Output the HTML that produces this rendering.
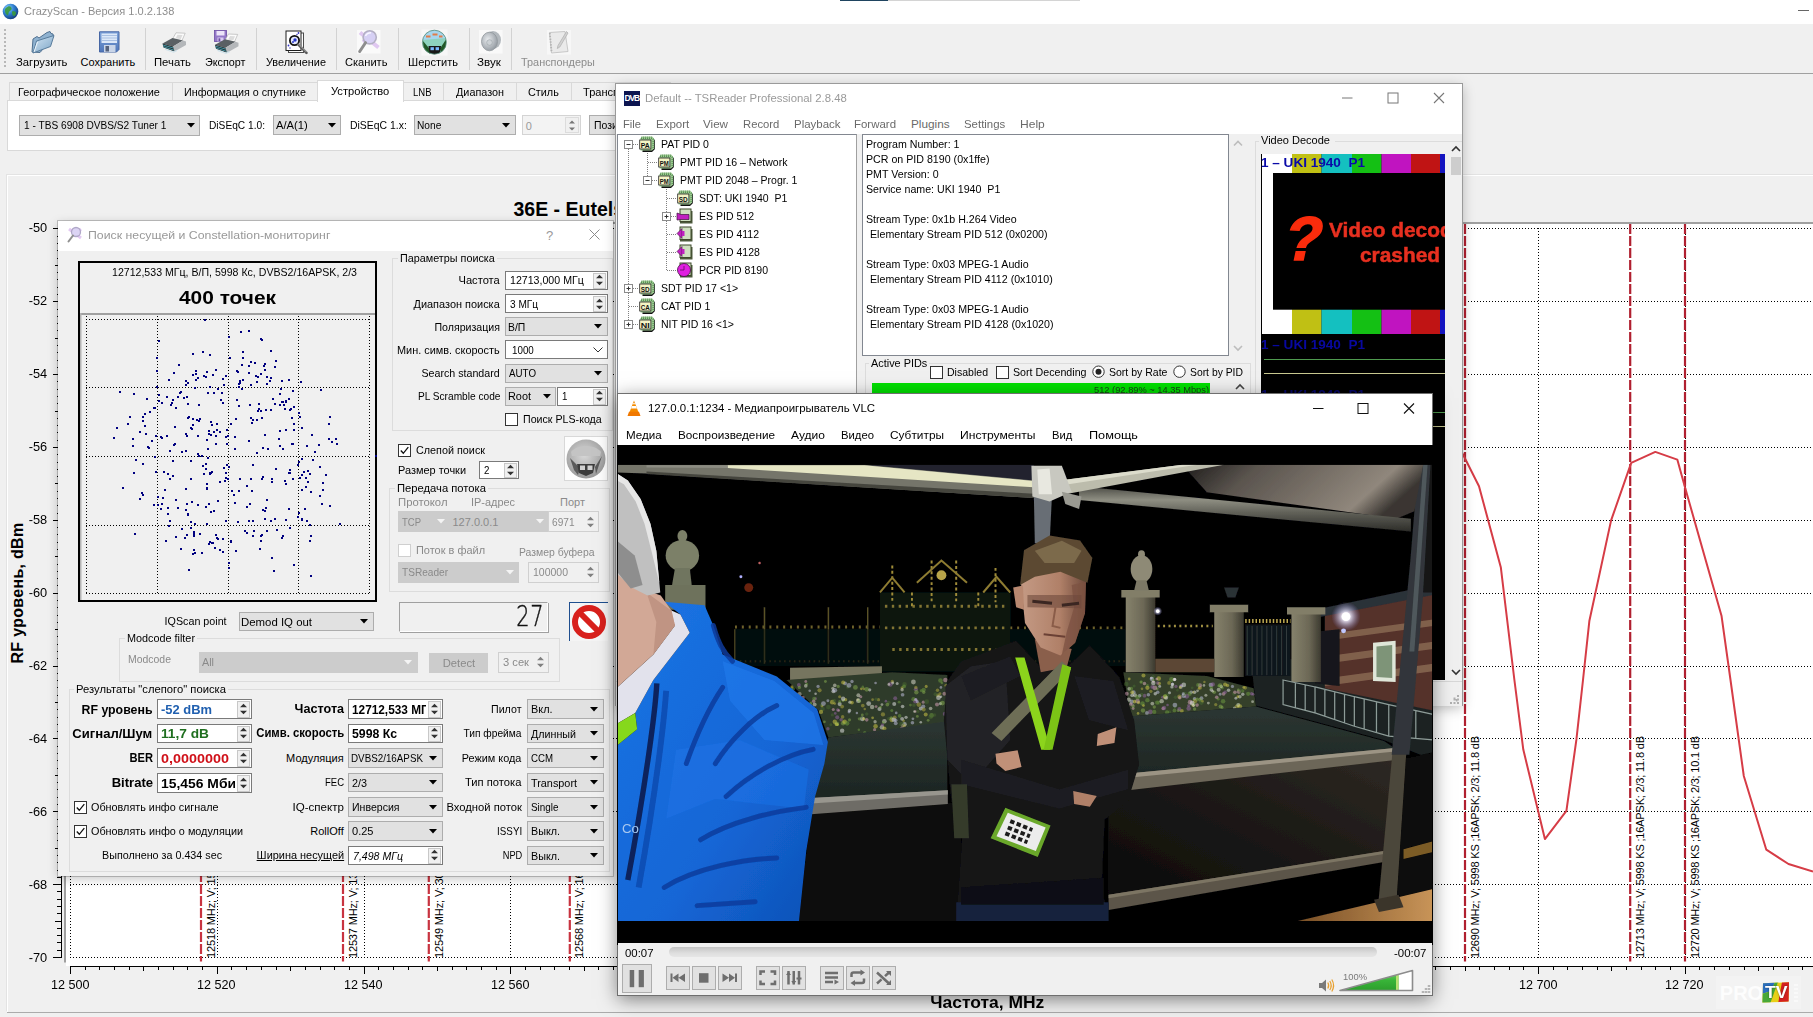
<!DOCTYPE html>
<html lang="ru"><head><meta charset="utf-8"><title>CrazyScan</title><style>
html,body{margin:0;padding:0;}
body{width:1813px;height:1017px;overflow:hidden;background:#f0f0f0;position:relative;font-family:"Liberation Sans",sans-serif;color:#000;}
.t{position:absolute;white-space:pre;font-family:"Liberation Sans",sans-serif;}
svg{overflow:visible;}
svg text{font-family:"Liberation Sans",sans-serif;}
</style></head><body>
<div style="position:absolute;left:0px;top:0px;width:1813px;height:24px;background:#fff;"></div>
<div style="position:absolute;left:840px;top:0px;width:48px;height:1px;background:#1f4460;"></div>
<div style="position:absolute;left:888px;top:0px;width:192px;height:1px;background:#d4d4d4;"></div>
<div style="position:absolute;left:1798px;top:10px;width:11px;height:1px;background:#666;"></div>
<svg style="position:absolute;left:2px;top:3px" width="17" height="17" viewBox="0 0 17 17"><defs><radialGradient id="gl" cx="35%" cy="30%" r="75%"><stop offset="0" stop-color="#8fd0ff"/><stop offset="0.5" stop-color="#2f7fd0"/><stop offset="1" stop-color="#123a7a"/></radialGradient></defs><circle cx="8.5" cy="8.5" r="7.8" fill="url(#gl)"/><path d="M4 5c2-2 4-2 5-1s1 3-1 4-1 3-2 4-3-2-3-4 0-2 1-3zM11 8c2 0 3 1 3 2s-1 3-2 3-2-2-2-3 0-2 1-2z" fill="#3a9a3a" opacity=".9"/></svg>
<div class="t" style="left:24.0px;top:4.0px;font-size:11.8px;line-height:15px;transform:scaleX(0.937);transform-origin:0 50%;color:#8e8e8e;">CrazyScan - Версия 1.0.2.138</div>
<div style="position:absolute;left:0px;top:24px;width:1813px;height:49px;background:#f0f0f0;border-bottom:1px solid #a0a0a0;"></div>
<div style="position:absolute;left:4px;top:29px;width:2px;height:40px;background:repeating-linear-gradient(#b8b8b8 0 2px,#f0f0f0 2px 4px);"></div>
<div style="position:absolute;left:145px;top:28px;width:1px;height:42px;background:#d2d2d2;"></div>
<div style="position:absolute;left:256px;top:28px;width:1px;height:42px;background:#d2d2d2;"></div>
<div style="position:absolute;left:335.5px;top:28px;width:1px;height:42px;background:#d2d2d2;"></div>
<div style="position:absolute;left:397.5px;top:28px;width:1px;height:42px;background:#d2d2d2;"></div>
<div style="position:absolute;left:468.5px;top:28px;width:1px;height:42px;background:#d2d2d2;"></div>
<div style="position:absolute;left:511px;top:28px;width:1px;height:42px;background:#d2d2d2;"></div>
<div class="t" style="left:15.5px;top:54.8px;font-size:11px;line-height:14px;transform:scaleX(1.025);transform-origin:0 50%;">Загрузить</div>
<div class="t" style="left:80.5px;top:54.8px;font-size:11px;line-height:14px;">Сохранить</div>
<div class="t" style="left:153.8px;top:54.8px;font-size:11px;line-height:14px;transform:scaleX(1.027);transform-origin:0 50%;">Печать</div>
<div class="t" style="left:204.5px;top:54.8px;font-size:11px;line-height:14px;transform:scaleX(0.980);transform-origin:0 50%;">Экспорт</div>
<div class="t" style="left:265.5px;top:54.8px;font-size:11px;line-height:14px;transform:scaleX(0.990);transform-origin:0 50%;">Увеличение</div>
<div class="t" style="left:345.0px;top:54.8px;font-size:11px;line-height:14px;transform:scaleX(1.009);transform-origin:0 50%;">Сканить</div>
<div class="t" style="left:407.7px;top:54.8px;font-size:11px;line-height:14px;transform:scaleX(1.005);transform-origin:0 50%;">Шерстить</div>
<div class="t" style="left:477.4px;top:54.8px;font-size:11px;line-height:14px;transform:scaleX(1.055);transform-origin:0 50%;">Звук</div>
<div class="t" style="left:520.6px;top:54.8px;font-size:11px;line-height:14px;transform:scaleX(0.989);transform-origin:0 50%;color:#8c8c8c;">Транспондеры</div>
<svg style="position:absolute;left:30.5px;top:30px" width="24" height="24" viewBox="0 0 24 24"><defs><linearGradient id="fo" x1="0" y1="0" x2="1" y2="1"><stop offset="0" stop-color="#d4e6f4"/><stop offset="1" stop-color="#7ba4c6"/></linearGradient></defs><path d="M1 22L2 9L6 6.5L8 8L16 2.5L19 1.5L20 3.5L22 4L22.5 7L9 22.5Z" fill="#8fb2d0" stroke="#4f7090" stroke-width="1"/><path d="M2 23L5.5 11L23 5.5L19.5 16.5Z" fill="url(#fo)" stroke="#587c9c" stroke-width="1"/><path d="M3 22L6.5 12" stroke="#eef6fc" stroke-width="1"/></svg>
<svg style="position:absolute;left:98px;top:31px" width="22.5" height="22" viewBox="0 0 22.5 22"><defs><linearGradient id="fl" x1="0" y1="0" x2="0" y2="1"><stop offset="0" stop-color="#7ea4dc"/><stop offset="1" stop-color="#4f76b8"/></linearGradient></defs><path d="M1.5 0.8H21V18.5L18.5 21H1.5Z" fill="url(#fl)" stroke="#4666a4" stroke-width="1"/><rect x="3.5" y="2.5" width="15.5" height="9.5" fill="#dce8f8"/><path d="M3.5 4.5H19M3.5 7H19M3.5 9.5H19" stroke="#a9c0e2" stroke-width="1"/><rect x="6" y="14" width="11.5" height="7" fill="#c9d5e8"/><rect x="7.5" y="15" width="3.5" height="5.5" fill="#55627c"/></svg>
<svg style="position:absolute;left:162px;top:32px" width="25" height="21" viewBox="0 0 25 21"><path d="M10.5 7L14 0.8L23.2 1.2L20 8.5Z" fill="#fbfbfb" stroke="#b4b4b4" stroke-width=".7"/><path d="M13.5 6.5L15.5 2.8L20.5 3L18.8 7Z" fill="#dcdcdc"/><path d="M0.5 11.5L10.5 6L21 8.5L11 14.5Z" fill="#5a6064"/><path d="M11 14.5L21 8.5L24 9.5V13L12.5 19.5Z" fill="#b4b7ba"/><path d="M0.5 11.5L11 14.5L12.5 19.5L1.5 15.5Z" fill="#22282b"/><path d="M1 13L11.4 16M1.3 14.6L12 18.2" stroke="#4aa0b0" stroke-width=".9"/><path d="M3 17.2L11.5 20.2L15 18.4" stroke="#cfe2ea" stroke-width="1.2" fill="none"/></svg>
<svg style="position:absolute;left:213.5px;top:29.5px" width="26" height="24" viewBox="0 0 26 24"><rect x="0.5" y="0.5" width="12" height="11" fill="#9478c8" stroke="#6c4ca4" stroke-width=".8"/><rect x="2.5" y="1" width="8" height="4.5" fill="#ece4f8"/><rect x="3.5" y="7.5" width="6" height="4" fill="#d9cdf0"/><rect x="4.5" y="8.3" width="1.8" height="3" fill="#6c4ca4"/><g transform="translate(0.5,3.2)"><path d="M10.5 7L14 0.8L23.2 1.2L20 8.5Z" fill="#fbfbfb" stroke="#b4b4b4" stroke-width=".7"/><path d="M13.5 6.5L15.5 2.8L20.5 3L18.8 7Z" fill="#dcdcdc"/><path d="M0.5 11.5L10.5 6L21 8.5L11 14.5Z" fill="#5a6064"/><path d="M11 14.5L21 8.5L24 9.5V13L12.5 19.5Z" fill="#b4b7ba"/><path d="M0.5 11.5L11 14.5L12.5 19.5L1.5 15.5Z" fill="#22282b"/><path d="M1 13L11.4 16M1.3 14.6L12 18.2" stroke="#4aa0b0" stroke-width=".9"/><path d="M3 17.2L11.5 20.2L15 18.4" stroke="#cfe2ea" stroke-width="1.2" fill="none"/></g></svg>
<svg style="position:absolute;left:285px;top:29.5px" width="24" height="24.5" viewBox="0 0 24 24.5"><rect x="3.5" y="3" width="15" height="19.5" fill="#fdfdfd" stroke="#4a4a4a" stroke-width="1"/><rect x="1" y="1" width="15" height="19.5" fill="#fff" stroke="#1c1c1c" stroke-width="1"/><circle cx="9.5" cy="10.5" r="4.6" fill="#e4e8ff" stroke="#111" stroke-width="1.8"/><circle cx="10" cy="10" r="1.7" fill="#2838c8"/><circle cx="8" cy="12" r="1" fill="#2838c8"/><path d="M13.2 14.4L21.5 22.8" stroke="#5a5a5a" stroke-width="2.6" stroke-linecap="round"/><path d="M13.6 14L21.5 22" stroke="#c8c8c8" stroke-width=".8"/><circle cx="3.5" cy="15.5" r=".9" fill="#3434c4"/><circle cx="13.5" cy="3" r=".9" fill="#3434c4"/><circle cx="5" cy="18" r=".7" fill="#3434c4"/><circle cx="12" cy="4.5" r=".7" fill="#3434c4"/></svg>
<svg style="position:absolute;left:357px;top:30px" width="23.5" height="23.5" viewBox="0 0 23.5 23.5"><rect x="0" y="0" width="23.5" height="23.5" fill="#fafafa"/><path d="M3 2.5L21.5 17.5M6 12L12 7" stroke="#dcc0f0" stroke-width="4" opacity=".85"/><circle cx="12.7" cy="7.3" r="6.6" fill="#d6d0f4" stroke="#b4b0c4" stroke-width="1.6"/><path d="M8.5 6Q10 2.8 14 2.8" stroke="#f8f6ff" stroke-width="1.6" fill="none"/><path d="M8.6 12.6L2.6 21.6" stroke="#8e8e8e" stroke-width="2.8" stroke-linecap="round"/></svg>
<svg style="position:absolute;left:421px;top:28.5px" width="27" height="27" viewBox="0 0 27 27"><rect x="0.5" y="0.5" width="26" height="26" fill="#f7f7f7"/><defs><clipPath id="cc"><circle cx="13.4" cy="13.2" r="12"/></clipPath></defs><g clip-path="url(#cc)"><rect width="27" height="27" fill="#8ed2be"/><path d="M0 0H27V9L0 11Z" fill="#a6d6ee"/><path d="M5 6.5h4.5v2H5zM11.5 4.5h5v2h-5zM18 6.5h3.5v2H18z" fill="#e27c48"/><path d="M2 12L9.5 21L8.5 27H3Z" fill="#215826"/><path d="M25 10.5L19 19.5L20.5 27H25Z" fill="#215826"/><path d="M7.5 17H20L19 23.5L13.5 26L8.5 23.5Z" fill="#181818"/><rect x="9.5" y="18.2" width="3.4" height="3" fill="#7cb8ff"/><rect x="14.6" y="18.2" width="3.4" height="3" fill="#7cb8ff"/></g><circle cx="13.4" cy="13.2" r="12" fill="none" stroke="#5a8a7a" stroke-width=".8"/></svg>
<svg style="position:absolute;left:479px;top:30px" width="23.5" height="23.5" viewBox="0 0 23.5 23.5"><rect x="0" y="0" width="23.5" height="23.5" fill="#f9f9f9"/><defs><radialGradient id="sp" cx="40%" cy="40%" r="65%"><stop offset="0" stop-color="#e8ebee"/><stop offset="1" stop-color="#9299a0"/></radialGradient></defs><ellipse cx="14" cy="10" rx="8" ry="9" fill="#b2b8bd"/><ellipse cx="10.5" cy="11.5" rx="8" ry="9.3" fill="url(#sp)" stroke="#90979c" stroke-width=".8"/><circle cx="10.5" cy="12.5" r="2.8" fill="#ccd1d5" stroke="#9ca3a8" stroke-width=".6"/></svg>
<svg style="position:absolute;left:546.5px;top:30px" width="24" height="24.5" viewBox="0 0 24 24.5"><rect x="0" y="0" width="24" height="24.5" fill="#f7f7f7"/><path d="M2.5 2.5L18 1.5L21 21.5L4.5 23Z" fill="#eaeaea" stroke="#c8c8c8" stroke-width="1"/><path d="M2.8 3L4.6 22.5" stroke="#b4b4b4" stroke-width="1.8" stroke-dasharray="1.4 1.4"/><path d="M19.5 1.5L11 15.5L10.3 18.5L12.8 17L21 3Z" fill="#d2d2d2" stroke="#adadad" stroke-width=".7"/></svg>
<div style="position:absolute;left:8.5px;top:82px;width:162.5px;height:18px;background:#f0f0f0;border:1px solid #d9d9d9;border-bottom:none;"></div>
<div class="t" style="left:18.0px;top:85.0px;font-size:11px;line-height:14px;transform:scaleX(0.995);transform-origin:0 50%;">Географическое положение</div>
<div style="position:absolute;left:172px;top:82px;width:144px;height:18px;background:#f0f0f0;border:1px solid #d9d9d9;border-bottom:none;"></div>
<div class="t" style="left:183.8px;top:85.0px;font-size:11px;line-height:14px;transform:scaleX(0.976);transform-origin:0 50%;">Информация о спутнике</div>
<div style="position:absolute;left:403px;top:82px;width:38.5px;height:18px;background:#f0f0f0;border:1px solid #d9d9d9;border-bottom:none;"></div>
<div class="t" style="left:413.3px;top:85.0px;font-size:11px;line-height:14px;transform:scaleX(0.865);transform-origin:0 50%;">LNB</div>
<div style="position:absolute;left:442.5px;top:82px;width:72.5px;height:18px;background:#f0f0f0;border:1px solid #d9d9d9;border-bottom:none;"></div>
<div class="t" style="left:456.0px;top:85.0px;font-size:11px;line-height:14px;transform:scaleX(0.984);transform-origin:0 50%;">Диапазон</div>
<div style="position:absolute;left:516px;top:82px;width:54px;height:18px;background:#f0f0f0;border:1px solid #d9d9d9;border-bottom:none;"></div>
<div class="t" style="left:528.3px;top:85.0px;font-size:11px;line-height:14px;transform:scaleX(0.985);transform-origin:0 50%;">Стиль</div>
<div style="position:absolute;left:571px;top:82px;width:98px;height:18px;background:#f0f0f0;border:1px solid #d9d9d9;border-bottom:none;"></div>
<div class="t" style="left:583.3px;top:85.0px;font-size:11px;line-height:14px;transform:scaleX(1.005);transform-origin:0 50%;">Транспондеры</div>
<div style="position:absolute;left:7px;top:100px;width:1000px;height:49px;background:#fff;border:1px solid #d9d9d9;"></div>
<div style="position:absolute;left:317px;top:80px;width:85px;height:21px;background:#fff;border:1px solid #d9d9d9;border-bottom:none;"></div>
<div class="t" style="left:330.5px;top:84.0px;font-size:11px;line-height:14px;transform:scaleX(1.013);transform-origin:0 50%;">Устройство</div>
<div style="position:absolute;left:19px;top:114.5px;width:179px;height:19px;background:#e1e1e1;border:1px solid #adadad;"></div><div class="t" style="left:23.8px;top:118.0px;font-size:11px;line-height:14px;transform:scaleX(0.922);transform-origin:0 50%;">1 - TBS 6908 DVBS/S2 Tuner 1</div><svg style="position:absolute;left:187px;top:123.0px" width="8" height="5"><path d="M0 0H8L4 4.5Z" fill="#000"/></svg>
<div class="t" style="left:209.0px;top:118.0px;font-size:11px;line-height:14px;transform:scaleX(0.925);transform-origin:0 50%;">DiSEqC 1.0:</div>
<div style="position:absolute;left:272.5px;top:115px;width:66.5px;height:18px;background:#e1e1e1;border:1px solid #adadad;"></div><div class="t" style="left:276.3px;top:118.0px;font-size:11px;line-height:14px;transform:scaleX(1.020);transform-origin:0 50%;">A/A(1)</div><svg style="position:absolute;left:327.8px;top:123.0px" width="8" height="5"><path d="M0 0H8L4 4.5Z" fill="#000"/></svg>
<div class="t" style="left:349.5px;top:118.0px;font-size:11px;line-height:14px;transform:scaleX(0.948);transform-origin:0 50%;">DiSEqC 1.x:</div>
<div style="position:absolute;left:413.5px;top:115px;width:100px;height:18px;background:#e1e1e1;border:1px solid #adadad;"></div><div class="t" style="left:417.0px;top:118.0px;font-size:11px;line-height:14px;transform:scaleX(0.924);transform-origin:0 50%;">None</div><svg style="position:absolute;left:502px;top:123.0px" width="8" height="5"><path d="M0 0H8L4 4.5Z" fill="#000"/></svg>
<div style="position:absolute;left:522px;top:115px;width:57px;height:18px;background:#f3f3f3;border:1px solid #d4d4d4;"></div>
<div style="position:absolute;left:565px;top:117px;width:12px;height:14px;background:#f0f0f0;border:1px solid #dcdcdc;"></div>
<div class="t" style="left:525.8px;top:118.5px;font-size:11px;line-height:14px;color:#9a9a9a;">0</div>
<svg style="position:absolute;left:567.5px;top:118.5px" width="8" height="13"><path d="M1 4.5L4 1.5L7 4.5M1 8.5L4 11.5L7 8.5" fill="#777" stroke="none"/></svg>
<div style="position:absolute;left:589px;top:115px;width:60px;height:18px;background:#e1e1e1;border:1px solid #adadad;"></div>
<div class="t" style="left:594.0px;top:118.0px;font-size:11px;line-height:14px;transform:scaleX(0.950);transform-origin:0 50%;">Позиционер</div>
<div style="position:absolute;left:7px;top:175px;width:1806px;height:836px;background:#f0f0f0;border:1px solid #fff;border-right:none;border-bottom:none;box-shadow:-1px -1px 0 #e3e3e3;"></div>
<div style="position:absolute;left:7px;top:1011.5px;width:1806px;height:1.6px;background:#ababab;"></div>
<svg style="position:absolute;left:0;top:0" width="1813" height="1017" viewBox="0 0 1813 1017">
<rect x="66" y="224" width="1747" height="742" fill="#fff"/>
<rect x="64" y="222" width="1749" height="2" fill="#a0a0a0"/>
<rect x="64" y="222" width="2" height="740.5" fill="#a0a0a0"/>
<path d="M70.5 228V960M217.5 228V960M364.5 228V960M510.5 228V960M657.5 228V960M804.5 228V960M951.5 228V960M1098.5 228V960M1244.5 228V960M1391.5 228V960M1538.5 228V960M1685.5 228V960M1832.5 228V960M1978.5 228V960M70 228.5H1813M70 301.5H1813M70 374.5H1813M70 447.5H1813M70 520.5H1813M70 593.5H1813M70 666.5H1813M70 738.5H1813M70 811.5H1813M70 884.5H1813M70 957.5H1813" stroke="#000" stroke-width="1" stroke-dasharray="1 2" fill="none" shape-rendering="crispEdges"/>
<path d="M61.5 228V958M53 228.5H62M53 301.5H62M53 374.5H62M53 447.5H62M53 520.5H62M53 593.5H62M53 666.5H62M53 738.5H62M53 811.5H62M53 884.5H62M53 957.5H62M57 236.5H62M57 243.5H62M57 250.5H62M57 258.5H62M55 265.5H62M57 272.5H62M57 279.5H62M57 287.5H62M57 294.5H62M57 309.5H62M57 316.5H62M57 323.5H62M57 330.5H62M55 338.5H62M57 345.5H62M57 352.5H62M57 360.5H62M57 367.5H62M57 381.5H62M57 389.5H62M57 396.5H62M57 403.5H62M55 411.5H62M57 418.5H62M57 425.5H62M57 432.5H62M57 440.5H62M57 454.5H62M57 462.5H62M57 469.5H62M57 476.5H62M55 483.5H62M57 491.5H62M57 498.5H62M57 505.5H62M57 513.5H62M57 527.5H62M57 534.5H62M57 542.5H62M57 549.5H62M55 556.5H62M57 564.5H62M57 571.5H62M57 578.5H62M57 585.5H62M57 600.5H62M57 607.5H62M57 615.5H62M57 622.5H62M55 629.5H62M57 636.5H62M57 644.5H62M57 651.5H62M57 658.5H62M57 673.5H62M57 680.5H62M57 687.5H62M57 695.5H62M55 702.5H62M57 709.5H62M57 717.5H62M57 724.5H62M57 731.5H62M57 746.5H62M57 753.5H62M57 760.5H62M57 768.5H62M55 775.5H62M57 782.5H62M57 789.5H62M57 797.5H62M57 804.5H62M57 819.5H62M57 826.5H62M57 833.5H62M57 840.5H62M55 848.5H62M57 855.5H62M57 862.5H62M57 870.5H62M57 877.5H62M57 891.5H62M57 899.5H62M57 906.5H62M57 913.5H62M55 921.5H62M57 928.5H62M57 935.5H62M57 942.5H62M57 950.5H62M70 966.5H1813M70.5 966V974M85.5 966V970M99.5 966V970M114.5 966V970M129.5 966V970M143.5 966V971M158.5 966V970M173.5 966V970M187.5 966V970M202.5 966V970M217.5 966V974M231.5 966V970M246.5 966V970M261.5 966V970M276.5 966V970M290.5 966V971M305.5 966V970M320.5 966V970M334.5 966V970M349.5 966V970M364.5 966V974M378.5 966V970M393.5 966V970M408.5 966V970M422.5 966V970M437.5 966V971M452.5 966V970M466.5 966V970M481.5 966V970M496.5 966V970M510.5 966V974M525.5 966V970M540.5 966V970M554.5 966V970M569.5 966V970M584.5 966V971M598.5 966V970M613.5 966V970M628.5 966V970M643.5 966V970M657.5 966V974M672.5 966V970M687.5 966V970M701.5 966V970M716.5 966V970M731.5 966V971M745.5 966V970M760.5 966V970M775.5 966V970M789.5 966V970M804.5 966V974M819.5 966V970M833.5 966V970M848.5 966V970M863.5 966V970M877.5 966V971M892.5 966V970M907.5 966V970M921.5 966V970M936.5 966V970M951.5 966V974M965.5 966V970M980.5 966V970M995.5 966V970M1010.5 966V970M1024.5 966V971M1039.5 966V970M1054.5 966V970M1068.5 966V970M1083.5 966V970M1098.5 966V974M1112.5 966V970M1127.5 966V970M1142.5 966V970M1156.5 966V970M1171.5 966V971M1186.5 966V970M1200.5 966V970M1215.5 966V970M1230.5 966V970M1244.5 966V974M1259.5 966V970M1274.5 966V970M1288.5 966V970M1303.5 966V970M1318.5 966V971M1332.5 966V970M1347.5 966V970M1362.5 966V970M1377.5 966V970M1391.5 966V974M1406.5 966V970M1421.5 966V970M1435.5 966V970M1450.5 966V970M1465.5 966V971M1479.5 966V970M1494.5 966V970M1509.5 966V970M1523.5 966V970M1538.5 966V974M1553.5 966V970M1567.5 966V970M1582.5 966V970M1597.5 966V970M1611.5 966V971M1626.5 966V970M1641.5 966V970M1655.5 966V970M1670.5 966V970M1685.5 966V974M1699.5 966V970M1714.5 966V970M1729.5 966V970M1744.5 966V970M1758.5 966V971M1773.5 966V970M1788.5 966V970M1802.5 966V970M1817.5 966V970M1832.5 966V974" stroke="#000" stroke-width="1" fill="none" shape-rendering="crispEdges"/>
<path d="M201 224V961.5" stroke="#c83440" stroke-width="2.2" stroke-dasharray="10 2" fill="none"/>
<path d="M343 224V961.5" stroke="#c83440" stroke-width="2.2" stroke-dasharray="10 2" fill="none"/>
<path d="M428.8 224V961.5" stroke="#c83440" stroke-width="2.2" stroke-dasharray="10 2" fill="none"/>
<path d="M569.8 224V961.5" stroke="#c83440" stroke-width="2.2" stroke-dasharray="10 2" fill="none"/>
<path d="M1465 224V961.5" stroke="#b02030" stroke-width="2.2" stroke-dasharray="10 2" fill="none"/>
<path d="M1630.2 224V961.5" stroke="#b02030" stroke-width="2.2" stroke-dasharray="10 2" fill="none"/>
<path d="M1685 224V961.5" stroke="#b02030" stroke-width="2.2" stroke-dasharray="10 2" fill="none"/>
<polyline points="1455,440 1463.4,455.2 1479,486.3 1500.8,567.2 1514.4,680 1523.3,749.6 1544.9,839.1 1566.4,810.9 1576.4,739.7 1583,680 1589.4,620.7 1611.1,520.4 1631.2,462.9 1655.3,451.9 1677.3,459.6 1684.7,486.3 1721.5,615.7 1730.5,680 1743.8,776 1766.3,849.7 1788.5,864 1813,871.6" stroke="#d63c46" stroke-width="2" fill="none" stroke-linejoin="round"/>
<text transform="translate(214.5,958) rotate(-90)" font-size="11" fill="#000" textLength="217" lengthAdjust="spacing">12518 MHz; V; 15000 KS ;8PSK; 3/4; 11.2 dB</text>
<text transform="translate(356.5,958) rotate(-90)" font-size="11" fill="#000" textLength="217" lengthAdjust="spacing">12537 MHz; V; 13333 KS ;8PSK; 3/4; 10.9 dB</text>
<text transform="translate(442.5,958) rotate(-90)" font-size="11" fill="#000" textLength="212" lengthAdjust="spacing">12549 MHz; V; 3000 KS ;8PSK; 3/4; 10.5 dB</text>
<text transform="translate(582.5,958) rotate(-90)" font-size="11" fill="#000" textLength="217" lengthAdjust="spacing">12568 MHz; V; 16000 KS ;8PSK; 3/4; 11.0 dB</text>
<text transform="translate(1478.5,958) rotate(-90)" font-size="11" fill="#000" textLength="222" lengthAdjust="spacing">12690 MHz; V; 5998 KS ;16APSK; 2/3; 11.8 dB</text>
<text transform="translate(1643.5,958) rotate(-90)" font-size="11" fill="#000" textLength="222" lengthAdjust="spacing">12713 MHz; V; 5998 KS ;16APSK; 2/3; 11.8 dB</text>
<text transform="translate(1699,958) rotate(-90)" font-size="11" fill="#000" textLength="222" lengthAdjust="spacing">12720 MHz; V; 5998 KS ;16APSK; 2/3; 10.1 dB</text>
</svg>
<div class="t" style="left:513.5px;top:197.0px;font-size:19.5px;line-height:25px;font-weight:bold;">36E - Eutelsat 36B</div>
<div class="t" style="left:28.3px;top:219.4px;font-size:13.3px;line-height:17px;transform:scaleX(0.963);transform-origin:100% 50%;">-50</div>
<div class="t" style="left:28.3px;top:292.4px;font-size:13.3px;line-height:17px;transform:scaleX(0.963);transform-origin:100% 50%;">-52</div>
<div class="t" style="left:28.3px;top:365.4px;font-size:13.3px;line-height:17px;transform:scaleX(0.963);transform-origin:100% 50%;">-54</div>
<div class="t" style="left:28.3px;top:438.4px;font-size:13.3px;line-height:17px;transform:scaleX(0.963);transform-origin:100% 50%;">-56</div>
<div class="t" style="left:28.3px;top:511.4px;font-size:13.3px;line-height:17px;transform:scaleX(0.963);transform-origin:100% 50%;">-58</div>
<div class="t" style="left:28.3px;top:584.4px;font-size:13.3px;line-height:17px;transform:scaleX(0.963);transform-origin:100% 50%;">-60</div>
<div class="t" style="left:28.3px;top:657.4px;font-size:13.3px;line-height:17px;transform:scaleX(0.963);transform-origin:100% 50%;">-62</div>
<div class="t" style="left:28.3px;top:730.4px;font-size:13.3px;line-height:17px;transform:scaleX(0.963);transform-origin:100% 50%;">-64</div>
<div class="t" style="left:28.3px;top:803.4px;font-size:13.3px;line-height:17px;transform:scaleX(0.963);transform-origin:100% 50%;">-66</div>
<div class="t" style="left:28.3px;top:876.4px;font-size:13.3px;line-height:17px;transform:scaleX(0.963);transform-origin:100% 50%;">-68</div>
<div class="t" style="left:28.3px;top:949.4px;font-size:13.3px;line-height:17px;transform:scaleX(0.963);transform-origin:100% 50%;">-70</div>
<div class="t" style="left:49.6px;top:975.5px;font-size:13.3px;line-height:17px;transform:scaleX(0.947);transform-origin:50% 50%;">12 500</div>
<div class="t" style="left:196.4px;top:975.5px;font-size:13.3px;line-height:17px;transform:scaleX(0.947);transform-origin:50% 50%;">12 520</div>
<div class="t" style="left:343.2px;top:975.5px;font-size:13.3px;line-height:17px;transform:scaleX(0.947);transform-origin:50% 50%;">12 540</div>
<div class="t" style="left:490.0px;top:975.5px;font-size:13.3px;line-height:17px;transform:scaleX(0.947);transform-origin:50% 50%;">12 560</div>
<div class="t" style="left:636.8px;top:975.5px;font-size:13.3px;line-height:17px;transform:scaleX(0.947);transform-origin:50% 50%;">12 580</div>
<div class="t" style="left:783.6px;top:975.5px;font-size:13.3px;line-height:17px;transform:scaleX(0.947);transform-origin:50% 50%;">12 600</div>
<div class="t" style="left:930.4px;top:975.5px;font-size:13.3px;line-height:17px;transform:scaleX(0.947);transform-origin:50% 50%;">12 620</div>
<div class="t" style="left:1077.2px;top:975.5px;font-size:13.3px;line-height:17px;transform:scaleX(0.947);transform-origin:50% 50%;">12 640</div>
<div class="t" style="left:1224.0px;top:975.5px;font-size:13.3px;line-height:17px;transform:scaleX(0.947);transform-origin:50% 50%;">12 660</div>
<div class="t" style="left:1370.8px;top:975.5px;font-size:13.3px;line-height:17px;transform:scaleX(0.947);transform-origin:50% 50%;">12 680</div>
<div class="t" style="left:1517.6px;top:975.5px;font-size:13.3px;line-height:17px;transform:scaleX(0.947);transform-origin:50% 50%;">12 700</div>
<div class="t" style="left:1664.4px;top:975.5px;font-size:13.3px;line-height:17px;transform:scaleX(0.947);transform-origin:50% 50%;">12 720</div>
<div class="t" style="left:934.7px;top:992.0px;font-size:16px;line-height:21px;transform:scaleX(1.090);transform-origin:50% 50%;font-weight:bold;">Частота, MHz</div>
<div class="t" style="left:-62px;top:583px;width:160px;text-align:center;font-size:16px;font-weight:bold;line-height:20px;transform:rotate(-90deg);letter-spacing:0.3px;">RF уровень, dBm</div>
<div style="position:absolute;left:58px;top:220.5px;width:555px;height:655.5px;background:#f0f0f0;box-shadow:0 0 0 1px rgba(0,0,0,.2), 0 3px 10px rgba(0,0,0,.22);"></div>
<div style="position:absolute;left:58px;top:220.5px;width:555px;height:30.5px;background:#fff;"></div>
<svg style="position:absolute;left:67px;top:226px" width="16" height="17" viewBox="0 0 16 17"><path d="M2 3L14 12M14 3L8 8" stroke="#dcbcf0" stroke-width="3" opacity=".8"/><circle cx="9" cy="6" r="4.5" fill="#dcd4f4" stroke="#b0a8c8" stroke-width="1.3"/><path d="M6 9.5L1.5 15.5" stroke="#909090" stroke-width="2" stroke-linecap="round"/></svg>
<div class="t" style="left:87.5px;top:227.7px;font-size:11.8px;line-height:15px;transform:scaleX(1.043);transform-origin:0 50%;color:#999;">Поиск несущей и Constellation-мониторинг</div>
<div class="t" style="left:545.9px;top:226.5px;font-size:13px;line-height:17px;color:#999;">?</div>
<svg style="position:absolute;left:589px;top:229px" width="11" height="11"><path d="M0.5 0.5L10.5 10.5M10.5 0.5L0.5 10.5" stroke="#8a8a8a" stroke-width="1"/></svg>
<div style="position:absolute;left:78px;top:261px;width:295px;height:337px;border:2px solid #000;background:#f0f0f0;"></div>
<div class="t" style="left:111.8px;top:265.0px;font-size:11px;line-height:14px;transform:scaleX(0.962);transform-origin:0 50%;">12712,533 МГц, В/П, 5998 Кс, DVBS2/16APSK, 2/3</div>
<div class="t" style="left:179.3px;top:285.5px;font-size:18.5px;line-height:24px;transform:scaleX(1.129);transform-origin:0 50%;font-weight:bold;">400 точек</div>
<svg style="position:absolute;left:0;top:0" width="1813" height="1017" viewBox="0 0 1813 1017"><rect x="80" y="313" width="295" height="2" fill="#a0a0a0"/><rect x="80" y="313" width="1.5" height="287" fill="#b4b4b4"/><path d="M86.5 316V595M157.5 316V595M228.5 316V595M298.5 316V595M369.5 316V595M86 319.5H370M86 387.5H370M86 456.5H370M86 525.5H370M86 593.5H370" stroke="#000" stroke-width="1" stroke-dasharray="1 2" fill="none" shape-rendering="crispEdges"/><path d="M167 473h2v2h-2zM226 443h2v2h-2zM139 498h2v2h-2zM266 376h2v2h-2zM208 503h2v2h-2zM211 424h2v2h-2zM192 353h2v2h-2zM192 424h2v2h-2zM239 382h2v2h-2zM132 445h2v2h-2zM127 423h2v2h-2zM228 466h2v2h-2zM193 535h2v2h-2zM192 418h2v2h-2zM252 520h2v2h-2zM276 529h2v2h-2zM281 380h2v2h-2zM116 427h2v2h-2zM273 570h2v2h-2zM239 478h2v2h-2zM162 497h2v2h-2zM213 431h2v2h-2zM142 494h2v2h-2zM289 469h2v2h-2zM225 472h2v2h-2zM231 490h2v2h-2zM281 537h2v2h-2zM190 521h2v2h-2zM269 380h2v2h-2zM250 361h2v2h-2zM177 396h2v2h-2zM322 489h2v2h-2zM195 370h2v2h-2zM158 340h2v2h-2zM217 538h2v2h-2zM299 416h2v2h-2zM227 435h2v2h-2zM170 404h2v2h-2zM160 508h2v2h-2zM298 412h2v2h-2zM174 443h2v2h-2zM194 552h2v2h-2zM301 474h2v2h-2zM225 477h2v2h-2zM246 485h2v2h-2zM230 423h2v2h-2zM167 513h2v2h-2zM241 364h2v2h-2zM194 387h2v2h-2zM329 505h2v2h-2zM270 520h2v2h-2zM318 444h2v2h-2zM146 398h2v2h-2zM261 478h2v2h-2zM184 537h2v2h-2zM250 417h2v2h-2zM202 465h2v2h-2zM185 509h2v2h-2zM178 364h2v2h-2zM135 459h2v2h-2zM260 338h2v2h-2zM213 392h2v2h-2zM279 430h2v2h-2zM304 508h2v2h-2zM134 533h2v2h-2zM187 513h2v2h-2zM223 384h2v2h-2zM157 504h2v2h-2zM225 436h2v2h-2zM211 471h2v2h-2zM213 510h2v2h-2zM319 466h2v2h-2zM186 503h2v2h-2zM180 548h2v2h-2zM205 468h2v2h-2zM328 438h2v2h-2zM288 508h2v2h-2zM297 464h2v2h-2zM335 438h2v2h-2zM210 472h2v2h-2zM260 540h2v2h-2zM260 373h2v2h-2zM209 354h2v2h-2zM252 535h2v2h-2zM191 501h2v2h-2zM265 507h2v2h-2zM285 429h2v2h-2zM270 409h2v2h-2zM251 422h2v2h-2zM278 438h2v2h-2zM197 453h2v2h-2zM307 470h2v2h-2zM207 448h2v2h-2zM227 478h2v2h-2zM185 488h2v2h-2zM242 351h2v2h-2zM292 478h2v2h-2zM203 375h2v2h-2zM254 362h2v2h-2zM238 490h2v2h-2zM197 377h2v2h-2zM158 394h2v2h-2zM328 423h2v2h-2zM193 549h2v2h-2zM293 564h2v2h-2zM215 534h2v2h-2zM217 388h2v2h-2zM201 552h2v2h-2zM164 489h2v2h-2zM133 472h2v2h-2zM234 448h2v2h-2zM145 433h2v2h-2zM215 369h2v2h-2zM166 435h2v2h-2zM283 404h2v2h-2zM264 518h2v2h-2zM154 407h2v2h-2zM303 471h2v2h-2zM210 421h2v2h-2zM206 483h2v2h-2zM209 472h2v2h-2zM238 386h2v2h-2zM339 523h2v2h-2zM261 534h2v2h-2zM331 441h2v2h-2zM262 476h2v2h-2zM289 409h2v2h-2zM139 431h2v2h-2zM274 518h2v2h-2zM190 460h2v2h-2zM234 436h2v2h-2zM236 370h2v2h-2zM309 540h2v2h-2zM237 521h2v2h-2zM222 538h2v2h-2zM264 369h2v2h-2zM292 443h2v2h-2zM208 430h2v2h-2zM166 396h2v2h-2zM225 520h2v2h-2zM129 416h2v2h-2zM197 435h2v2h-2zM301 519h2v2h-2zM172 475h2v2h-2zM242 379h2v2h-2zM248 372h2v2h-2zM219 549h2v2h-2zM249 404h2v2h-2zM206 488h2v2h-2zM193 531h2v2h-2zM147 446h2v2h-2zM290 408h2v2h-2zM210 511h2v2h-2zM321 503h2v2h-2zM336 443h2v2h-2zM246 506h2v2h-2zM329 416h2v2h-2zM260 410h2v2h-2zM212 374h2v2h-2zM187 514h2v2h-2zM262 509h2v2h-2zM206 371h2v2h-2zM207 457h2v2h-2zM203 473h2v2h-2zM305 486h2v2h-2zM174 426h2v2h-2zM204 319h2v2h-2zM309 473h2v2h-2zM153 407h2v2h-2zM257 376h2v2h-2zM156 370h2v2h-2zM311 434h2v2h-2zM179 392h2v2h-2zM242 357h2v2h-2zM132 438h2v2h-2zM271 478h2v2h-2zM190 427h2v2h-2zM248 440h2v2h-2zM301 518h2v2h-2zM255 375h2v2h-2zM180 391h2v2h-2zM192 374h2v2h-2zM173 372h2v2h-2zM209 541h2v2h-2zM298 461h2v2h-2zM291 443h2v2h-2zM250 478h2v2h-2zM155 471h2v2h-2zM240 331h2v2h-2zM151 440h2v2h-2zM230 541h2v2h-2zM197 504h2v2h-2zM206 439h2v2h-2zM144 425h2v2h-2zM158 400h2v2h-2zM175 499h2v2h-2zM258 408h2v2h-2zM248 365h2v2h-2zM222 551h2v2h-2zM113 437h2v2h-2zM314 451h2v2h-2zM142 463h2v2h-2zM161 402h2v2h-2zM289 472h2v2h-2zM280 388h2v2h-2zM288 472h2v2h-2zM169 478h2v2h-2zM293 429h2v2h-2zM281 401h2v2h-2zM186 396h2v2h-2zM270 350h2v2h-2zM228 562h2v2h-2zM238 383h2v2h-2zM185 433h2v2h-2zM186 534h2v2h-2zM279 393h2v2h-2zM192 553h2v2h-2zM171 402h2v2h-2zM262 447h2v2h-2zM325 474h2v2h-2zM177 507h2v2h-2zM297 516h2v2h-2zM251 490h2v2h-2zM275 468h2v2h-2zM310 535h2v2h-2zM252 419h2v2h-2zM198 420h2v2h-2zM291 417h2v2h-2zM246 532h2v2h-2zM194 523h2v2h-2zM239 380h2v2h-2zM264 434h2v2h-2zM282 535h2v2h-2zM195 373h2v2h-2zM225 375h2v2h-2zM161 437h2v2h-2zM259 548h2v2h-2zM260 535h2v2h-2zM198 404h2v2h-2zM167 507h2v2h-2zM149 411h2v2h-2zM237 371h2v2h-2zM250 384h2v2h-2zM169 450h2v2h-2zM300 381h2v2h-2zM216 429h2v2h-2zM211 542h2v2h-2zM282 448h2v2h-2zM256 419h2v2h-2zM144 413h2v2h-2zM279 404h2v2h-2zM309 524h2v2h-2zM233 494h2v2h-2zM285 519h2v2h-2zM187 403h2v2h-2zM223 467h2v2h-2zM188 569h2v2h-2zM271 557h2v2h-2zM222 402h2v2h-2zM236 399h2v2h-2zM322 482h2v2h-2zM212 542h2v2h-2zM209 473h2v2h-2zM248 330h2v2h-2zM141 492h2v2h-2zM205 463h2v2h-2zM163 471h2v2h-2zM219 481h2v2h-2zM301 458h2v2h-2zM217 500h2v2h-2zM319 495h2v2h-2zM258 403h2v2h-2zM293 423h2v2h-2zM122 487h2v2h-2zM190 478h2v2h-2zM285 401h2v2h-2zM186 435h2v2h-2zM320 389h2v2h-2zM206 487h2v2h-2zM205 506h2v2h-2zM289 527h2v2h-2zM266 499h2v2h-2zM252 464h2v2h-2zM156 386h2v2h-2zM175 407h2v2h-2zM209 386h2v2h-2zM241 388h2v2h-2zM195 370h2v2h-2zM219 431h2v2h-2zM284 480h2v2h-2zM228 336h2v2h-2zM216 423h2v2h-2zM224 480h2v2h-2zM264 363h2v2h-2zM272 398h2v2h-2zM267 448h2v2h-2zM175 536h2v2h-2zM375 455h2v2h-2zM187 417h2v2h-2zM261 339h2v2h-2zM244 530h2v2h-2zM155 435h2v2h-2zM299 477h2v2h-2zM256 452h2v2h-2zM301 427h2v2h-2zM274 403h2v2h-2zM142 416h2v2h-2zM198 455h2v2h-2zM169 520h2v2h-2zM161 503h2v2h-2zM208 543h2v2h-2zM257 410h2v2h-2zM193 533h2v2h-2zM288 398h2v2h-2zM282 401h2v2h-2zM172 460h2v2h-2zM293 406h2v2h-2zM292 390h2v2h-2zM306 445h2v2h-2zM238 405h2v2h-2zM226 429h2v2h-2zM188 416h2v2h-2zM226 464h2v2h-2zM263 365h2v2h-2zM199 533h2v2h-2zM310 491h2v2h-2zM216 537h2v2h-2zM181 528h2v2h-2zM270 377h2v2h-2zM199 418h2v2h-2zM190 527h2v2h-2zM142 420h2v2h-2zM185 384h2v2h-2zM274 518h2v2h-2zM235 418h2v2h-2zM185 380h2v2h-2zM301 489h2v2h-2zM214 547h2v2h-2zM228 567h2v2h-2zM215 435h2v2h-2zM154 456h2v2h-2zM207 392h2v2h-2zM311 434h2v2h-2zM266 530h2v2h-2zM298 512h2v2h-2zM274 366h2v2h-2zM222 378h2v2h-2zM191 428h2v2h-2zM187 382h2v2h-2zM133 393h2v2h-2zM229 357h2v2h-2zM205 376h2v2h-2zM265 409h2v2h-2zM156 357h2v2h-2zM288 379h2v2h-2zM196 419h2v2h-2zM264 510h2v2h-2zM249 503h2v2h-2zM206 523h2v2h-2zM230 540h2v2h-2zM168 525h2v2h-2zM220 399h2v2h-2zM201 455h2v2h-2zM119 391h2v2h-2zM148 447h2v2h-2zM221 392h2v2h-2zM235 550h2v2h-2zM215 443h2v2h-2zM208 433h2v2h-2zM165 540h2v2h-2zM195 379h2v2h-2zM312 459h2v2h-2zM307 481h2v2h-2zM202 351h2v2h-2zM185 450h2v2h-2zM161 402h2v2h-2zM279 445h2v2h-2zM153 504h2v2h-2zM306 520h2v2h-2zM210 434h2v2h-2zM285 400h2v2h-2zM271 481h2v2h-2zM256 381h2v2h-2zM253 530h2v2h-2zM173 444h2v2h-2zM305 477h2v2h-2zM248 520h2v2h-2zM310 575h2v2h-2zM172 399h2v2h-2zM181 451h2v2h-2zM168 379h2v2h-2zM234 502h2v2h-2zM160 436h2v2h-2zM266 383h2v2h-2zM284 408h2v2h-2zM275 360h2v2h-2zM157 496h2v2h-2zM183 397h2v2h-2zM285 483h2v2h-2zM261 417h2v2h-2z" fill="#000080" shape-rendering="crispEdges"/></svg>
<div style="position:absolute;left:392px;top:258px;width:219px;height:171px;border:1px solid #dcdcdc;"></div><div style="position:absolute;left:398.3px;top:251px;width:98.8px;height:14px;background:#f0f0f0;"></div><div class="t" style="left:400.3px;top:251.0px;font-size:11px;line-height:14px;transform:scaleX(0.982);transform-origin:0 50%;">Параметры поиска</div>
<div class="t" style="left:459.2px;top:273.0px;font-size:11px;line-height:14px;transform:scaleX(1.013);transform-origin:100% 50%;">Частота</div>
<div class="t" style="left:413.3px;top:296.5px;font-size:11px;line-height:14px;transform:scaleX(0.994);transform-origin:100% 50%;">Диапазон поиска</div>
<div class="t" style="left:432.0px;top:319.5px;font-size:11px;line-height:14px;transform:scaleX(0.964);transform-origin:100% 50%;">Поляризация</div>
<div class="t" style="left:396.3px;top:342.5px;font-size:11px;line-height:14px;transform:scaleX(0.990);transform-origin:100% 50%;">Мин. симв. скорость</div>
<div class="t" style="left:419.3px;top:365.7px;font-size:11px;line-height:14px;transform:scaleX(0.970);transform-origin:100% 50%;">Search standard</div>
<div class="t" style="left:410.5px;top:389.2px;font-size:11px;line-height:14px;transform:scaleX(0.923);transform-origin:100% 50%;">PL Scramble code</div>
<div style="position:absolute;left:505px;top:270.5px;width:101px;height:17px;background:#fff;border:1px solid #7a7a7a;"></div><div style="position:absolute;left:505px;top:270.5px;width:87px;height:19px;overflow:hidden;"><div class="t" style="left:4.8px;top:2.8px;font-size:11px;line-height:14px;transform:scaleX(0.965);transform-origin:0 50%;">12713,000 МГц</div></div><div style="position:absolute;left:593px;top:272.5px;width:11px;height:14px;background:#f0f0f0;border:1px solid #c8c8c8;"></div><svg style="position:absolute;left:596px;top:274.0px" width="7" height="12"><path d="M0 4.2L3.5 0.7L7 4.2ZM0 7.8L3.5 11.3L7 7.8Z" fill="#333"/></svg>
<div style="position:absolute;left:505px;top:294px;width:101px;height:17px;background:#fff;border:1px solid #7a7a7a;"></div><div style="position:absolute;left:505px;top:294px;width:87px;height:19px;overflow:hidden;"><div class="t" style="left:4.5px;top:2.8px;font-size:11px;line-height:14px;transform:scaleX(0.915);transform-origin:0 50%;">3 МГц</div></div><div style="position:absolute;left:593px;top:296px;width:11px;height:14px;background:#f0f0f0;border:1px solid #c8c8c8;"></div><svg style="position:absolute;left:596px;top:297.5px" width="7" height="12"><path d="M0 4.2L3.5 0.7L7 4.2ZM0 7.8L3.5 11.3L7 7.8Z" fill="#333"/></svg>
<div style="position:absolute;left:505px;top:317px;width:101px;height:17px;background:#e1e1e1;border:1px solid #adadad;"></div><div class="t" style="left:508.3px;top:319.8px;font-size:11px;line-height:14px;transform:scaleX(0.945);transform-origin:0 50%;">В/П</div><svg style="position:absolute;left:594.4px;top:324.2px" width="8" height="4.5"><path d="M0 0H8L4.0 4.5Z" fill="#000"/></svg>
<div style="position:absolute;left:505px;top:340px;width:101px;height:17px;background:#fff;border:1px solid #7a7a7a;"></div>
<div class="t" style="left:512.2px;top:342.8px;font-size:11px;line-height:14px;transform:scaleX(0.891);transform-origin:0 50%;">1000</div>
<svg style="position:absolute;left:593px;top:347px" width="10" height="6"><path d="M0.5 0.5L5 5L9.5 0.5" stroke="#333" stroke-width="1" fill="none"/></svg>
<div style="position:absolute;left:505px;top:363.5px;width:101px;height:17px;background:#e1e1e1;border:1px solid #adadad;"></div><div class="t" style="left:508.9px;top:366.3px;font-size:11px;line-height:14px;transform:scaleX(0.889);transform-origin:0 50%;">AUTO</div><svg style="position:absolute;left:594.4px;top:370.8px" width="8" height="4.5"><path d="M0 0H8L4.0 4.5Z" fill="#000"/></svg>
<div style="position:absolute;left:505px;top:386.5px;width:49px;height:17px;background:#e1e1e1;border:1px solid #adadad;"></div><div class="t" style="left:508.3px;top:389.3px;font-size:11px;line-height:14px;transform:scaleX(0.990);transform-origin:0 50%;">Root</div><svg style="position:absolute;left:543.2px;top:393.8px" width="8" height="4.5"><path d="M0 0H8L4.0 4.5Z" fill="#000"/></svg>
<div style="position:absolute;left:557px;top:386.5px;width:49px;height:17px;background:#fff;border:1px solid #7a7a7a;"></div><div style="position:absolute;left:557px;top:386.5px;width:35px;height:19px;overflow:hidden;"><div class="t" style="left:5.0px;top:2.8px;font-size:11px;line-height:14px;transform:scaleX(0.885);transform-origin:0 50%;">1</div></div><div style="position:absolute;left:593px;top:388.5px;width:11px;height:14px;background:#f0f0f0;border:1px solid #c8c8c8;"></div><svg style="position:absolute;left:596px;top:390.0px" width="7" height="12"><path d="M0 4.2L3.5 0.7L7 4.2ZM0 7.8L3.5 11.3L7 7.8Z" fill="#333"/></svg>
<div style="position:absolute;left:505px;top:412.5px;width:11px;height:11px;background:#fff;border:1px solid #333;"></div>
<div class="t" style="left:522.6px;top:412.0px;font-size:11px;line-height:14px;transform:scaleX(0.968);transform-origin:0 50%;">Поиск PLS-кода</div>
<div style="position:absolute;left:398px;top:444px;width:11px;height:11px;background:#fff;border:1px solid #333;"></div><svg style="position:absolute;left:398px;top:444px" width="13" height="13"><path d="M2.8 6.5L5.3 9.3L10.3 3.2" stroke="#111" stroke-width="1.3" fill="none"/></svg>
<div class="t" style="left:415.8px;top:443.0px;font-size:11px;line-height:14px;transform:scaleX(0.982);transform-origin:0 50%;">Слепой поиск</div>
<div class="t" style="left:398.0px;top:463.3px;font-size:11px;line-height:14px;transform:scaleX(0.995);transform-origin:0 50%;">Размер точки</div>
<div style="position:absolute;left:478.5px;top:461px;width:38.5px;height:16px;background:#fff;border:1px solid #7a7a7a;"></div><div style="position:absolute;left:478.5px;top:461px;width:24.5px;height:18px;overflow:hidden;"><div class="t" style="left:5.5px;top:2.3px;font-size:11px;line-height:14px;transform:scaleX(0.885);transform-origin:0 50%;">2</div></div><div style="position:absolute;left:504.0px;top:463px;width:11px;height:13px;background:#f0f0f0;border:1px solid #c8c8c8;"></div><svg style="position:absolute;left:507.0px;top:464.0px" width="7" height="12"><path d="M0 4.2L3.5 0.7L7 4.2ZM0 7.8L3.5 11.3L7 7.8Z" fill="#333"/></svg>
<div style="position:absolute;left:563.5px;top:436px;width:42.5px;height:43px;background:#fdfdfd;border:1px solid #d8d8d8;"></div>
<svg style="position:absolute;left:565px;top:438px" width="42" height="42" viewBox="0 0 42 42"><defs><radialGradient id="cb" cx="45%" cy="40%" r="60%"><stop offset="0" stop-color="#d8d8d8"/><stop offset="1" stop-color="#9a9a9a"/></radialGradient></defs><circle cx="21" cy="21" r="19.5" fill="url(#cb)"/><path d="M6 14C12 6 30 6 36 14L35 18L7 18Z" fill="#c4c4c4"/><path d="M5 20L15 30L13 37L9 32Z" fill="#5a5a5a"/><path d="M37 18L30 29L31 36Z" fill="#5a5a5a"/><path d="M12 26H30L28 35L21 38L14 35Z" fill="#3c3c3c"/><rect x="15" y="27.5" width="5" height="4.5" fill="#d0d0d0"/><rect x="22.5" y="27.5" width="5" height="4.5" fill="#d0d0d0"/></svg>
<div style="position:absolute;left:388.5px;top:487.5px;width:219px;height:102px;border:1px solid #dcdcdc;"></div><div style="position:absolute;left:394.5px;top:480.5px;width:93px;height:14px;background:#f0f0f0;"></div><div class="t" style="left:396.5px;top:480.5px;font-size:11px;line-height:14px;transform:scaleX(1.020);transform-origin:0 50%;">Передача потока</div>
<div class="t" style="left:398.4px;top:495.0px;font-size:11px;line-height:14px;transform:scaleX(1.028);transform-origin:0 50%;color:#8a8a8a;">Протокол</div>
<div class="t" style="left:470.7px;top:495.0px;font-size:11px;line-height:14px;transform:scaleX(0.993);transform-origin:0 50%;color:#8a8a8a;">IP-адрес</div>
<div class="t" style="left:560.0px;top:495.0px;font-size:11px;line-height:14px;color:#8a8a8a;">Порт</div>
<div style="position:absolute;left:398px;top:511px;width:50px;height:21px;background:#cccccc;"></div><div class="t" style="left:402.0px;top:514.8px;font-size:11px;line-height:14px;transform:scaleX(0.864);transform-origin:0 50%;color:#8a8a8a;">TCP</div><svg style="position:absolute;left:436.5px;top:519.2px" width="8" height="4.5"><path d="M0 0H8L4.0 4.5Z" fill="#f4f4f4"/></svg>
<div style="position:absolute;left:447.5px;top:511px;width:1px;height:21px;background:#d8d8d8;"></div>
<div style="position:absolute;left:448px;top:511px;width:100px;height:21px;background:#cccccc;"></div><div class="t" style="left:452.5px;top:514.8px;font-size:11px;line-height:14px;color:#8a8a8a;">127.0.0.1</div><svg style="position:absolute;left:536.0px;top:519.2px" width="8" height="4.5"><path d="M0 0H8L4.0 4.5Z" fill="#f4f4f4"/></svg>
<div style="position:absolute;left:548px;top:511px;width:49px;height:19px;background:#f0f0f0;border:1px solid #d0d0d0;"></div><div style="position:absolute;left:548px;top:511px;width:35px;height:21px;overflow:hidden;"><div class="t" style="left:4.0px;top:3.8px;font-size:11px;line-height:14px;transform:scaleX(0.920);transform-origin:0 50%;color:#8a8a8a;">6971</div></div><svg style="position:absolute;left:587px;top:515.5px" width="7" height="12"><path d="M0 4.2L3.5 0.7L7 4.2ZM0 7.8L3.5 11.3L7 7.8Z" fill="#808080"/></svg>
<div style="position:absolute;left:398px;top:543.5px;width:11px;height:11px;background:#fff;border:1px solid #cfcfcf;"></div>
<div class="t" style="left:415.5px;top:542.5px;font-size:11px;line-height:14px;transform:scaleX(0.996);transform-origin:0 50%;color:#8a8a8a;">Поток в файл</div>
<div class="t" style="left:519.0px;top:544.5px;font-size:11px;line-height:14px;transform:scaleX(0.947);transform-origin:0 50%;color:#8a8a8a;">Размер буфера</div>
<div style="position:absolute;left:398px;top:561.5px;width:121px;height:21px;background:#cccccc;"></div><div class="t" style="left:402.0px;top:565.3px;font-size:11px;line-height:14px;transform:scaleX(0.918);transform-origin:0 50%;color:#8a8a8a;">TSReader</div><svg style="position:absolute;left:506.0px;top:569.8px" width="8" height="4.5"><path d="M0 0H8L4.0 4.5Z" fill="#f4f4f4"/></svg>
<div style="position:absolute;left:528px;top:561.5px;width:69px;height:19px;background:#f0f0f0;border:1px solid #d0d0d0;"></div><div style="position:absolute;left:528px;top:561.5px;width:55px;height:21px;overflow:hidden;"><div class="t" style="left:5.0px;top:3.8px;font-size:11px;line-height:14px;transform:scaleX(0.954);transform-origin:0 50%;color:#8a8a8a;">100000</div></div><svg style="position:absolute;left:587px;top:566.0px" width="7" height="12"><path d="M0 4.2L3.5 0.7L7 4.2ZM0 7.8L3.5 11.3L7 7.8Z" fill="#808080"/></svg>
<div style="position:absolute;left:398.5px;top:602px;width:147.5px;height:28px;background:#f0f0f0;border:1px solid #a0a0a0;border-right-color:#fff;border-bottom-color:#fff;box-shadow:1px 1px 0 #a0a0a0;"></div>
<div class="t" style="left:508px;top:599px;font-family:'DejaVu Sans','Liberation Sans',sans-serif;font-weight:200;font-size:27.5px;line-height:34px;transform:scaleX(.76);transform-origin:100% 50%;width:34.5px;text-align:right;letter-spacing:1px;color:#111;-webkit-text-stroke:.45px #111;">27</div>
<div style="position:absolute;left:569px;top:602px;width:38px;height:38px;background:#f4f4f4;border-left:1px solid #1f4f8f;border-top:1px solid #1f4f8f;"></div>
<svg style="position:absolute;left:571px;top:604px" width="36" height="36" viewBox="0 0 36 36"><circle cx="18" cy="18" r="14" fill="#fff" stroke="#d8201c" stroke-width="6"/><path d="M8.5 8.5L27.5 27.5" stroke="#d8201c" stroke-width="6"/></svg>
<div class="t" style="left:163.4px;top:614.0px;font-size:11px;line-height:14px;transform:scaleX(0.975);transform-origin:100% 50%;">IQScan point</div>
<div style="position:absolute;left:238.5px;top:612px;width:133px;height:17px;background:#e1e1e1;border:1px solid #adadad;"></div><div class="t" style="left:241.0px;top:614.8px;font-size:11px;line-height:14px;transform:scaleX(1.037);transform-origin:0 50%;">Demod IQ out</div><svg style="position:absolute;left:360.0px;top:619.2px" width="8" height="4.5"><path d="M0 0H8L4.0 4.5Z" fill="#000"/></svg>
<div style="position:absolute;left:118.5px;top:638px;width:439px;height:41.5px;border:1px solid #dcdcdc;"></div><div style="position:absolute;left:124.5px;top:631px;width:72px;height:14px;background:#f0f0f0;"></div><div class="t" style="left:126.5px;top:631.0px;font-size:11px;line-height:14px;transform:scaleX(0.984);transform-origin:0 50%;">Modcode filter</div>
<div class="t" style="left:127.5px;top:651.5px;font-size:11px;line-height:14px;transform:scaleX(0.950);transform-origin:0 50%;color:#8a8a8a;">Modcode</div>
<div style="position:absolute;left:198.5px;top:651.5px;width:219.5px;height:21px;background:#cccccc;"></div><div class="t" style="left:202.0px;top:655.3px;font-size:11px;line-height:14px;transform:scaleX(0.982);transform-origin:0 50%;color:#8a8a8a;">All</div><svg style="position:absolute;left:404.0px;top:659.8px" width="8" height="4.5"><path d="M0 0H8L4.0 4.5Z" fill="#f4f4f4"/></svg>
<div style="position:absolute;left:429px;top:652.5px;width:59px;height:20.5px;background:#cccccc;"></div>
<div class="t" style="left:442.6px;top:655.8px;font-size:11px;line-height:14px;transform:scaleX(1.022);transform-origin:50% 50%;color:#8a8a8a;">Detect</div>
<div style="position:absolute;left:498px;top:651.5px;width:49px;height:19px;background:#f0f0f0;border:1px solid #d0d0d0;"></div><div style="position:absolute;left:498px;top:651.5px;width:35px;height:21px;overflow:hidden;"><div class="t" style="left:4.5px;top:3.8px;font-size:11px;line-height:14px;transform:scaleX(1.016);transform-origin:0 50%;color:#8a8a8a;">3 сек</div></div><svg style="position:absolute;left:537px;top:656.0px" width="7" height="12"><path d="M0 4.2L3.5 0.7L7 4.2ZM0 7.8L3.5 11.3L7 7.8Z" fill="#808080"/></svg>
<div style="position:absolute;left:68.5px;top:688.5px;width:539.5px;height:181.5px;border:1px solid #dcdcdc;"></div><div style="position:absolute;left:74.3px;top:681.5px;width:154px;height:14px;background:#f0f0f0;"></div><div class="t" style="left:76.3px;top:681.5px;font-size:11px;line-height:14px;transform:scaleX(1.022);transform-origin:0 50%;">Результаты "слепого" поиска</div>
<div class="t" style="left:76.2px;top:700.5px;font-size:13.3px;line-height:17px;transform:scaleX(0.928);transform-origin:100% 50%;font-weight:bold;">RF уровень</div>
<div class="t" style="left:71.4px;top:724.7px;font-size:13.3px;line-height:17px;transform:scaleX(0.984);transform-origin:100% 50%;font-weight:bold;">Сигнал/Шум</div>
<div class="t" style="left:124.6px;top:749.3px;font-size:13.3px;line-height:17px;transform:scaleX(0.837);transform-origin:100% 50%;font-weight:bold;">BER</div>
<div class="t" style="left:110.6px;top:774.2px;font-size:13.3px;line-height:17px;transform:scaleX(0.985);transform-origin:100% 50%;font-weight:bold;">Bitrate</div>
<div style="position:absolute;left:157px;top:699.3px;width:93px;height:17.5px;background:#fff;border:1px solid #7a7a7a;"></div><div style="position:absolute;left:157px;top:699.3px;width:78px;height:19.5px;overflow:hidden;"><div class="t" style="left:4.0px;top:1.6px;font-size:13.3px;line-height:17px;transform:scaleX(0.972);transform-origin:0 50%;font-weight:bold;color:#2060b0;">-52 dBm</div></div><div style="position:absolute;left:237px;top:701.3px;width:11px;height:14.5px;background:#f0f0f0;border:1px solid #c8c8c8;"></div><svg style="position:absolute;left:240px;top:703.05px" width="7" height="12"><path d="M0 4.2L3.5 0.7L7 4.2ZM0 7.8L3.5 11.3L7 7.8Z" fill="#333"/></svg>
<div style="position:absolute;left:157px;top:723.5px;width:93px;height:17.5px;background:#fff;border:1px solid #7a7a7a;"></div><div style="position:absolute;left:157px;top:723.5px;width:78px;height:19.5px;overflow:hidden;"><div class="t" style="left:4.0px;top:1.6px;font-size:13.3px;line-height:17px;transform:scaleX(1.031);transform-origin:0 50%;font-weight:bold;color:#1f6f1f;">11,7 dB</div></div><div style="position:absolute;left:237px;top:725.5px;width:11px;height:14.5px;background:#f0f0f0;border:1px solid #c8c8c8;"></div><svg style="position:absolute;left:240px;top:727.25px" width="7" height="12"><path d="M0 4.2L3.5 0.7L7 4.2ZM0 7.8L3.5 11.3L7 7.8Z" fill="#333"/></svg>
<div style="position:absolute;left:157px;top:748px;width:93px;height:17.5px;background:#fff;border:1px solid #7a7a7a;"></div><div style="position:absolute;left:157px;top:748px;width:78px;height:19.5px;overflow:hidden;"><div class="t" style="left:4.0px;top:1.6px;font-size:13.3px;line-height:17px;transform:scaleX(1.082);transform-origin:0 50%;font-weight:bold;color:#d01018;">0,0000000</div></div><div style="position:absolute;left:237px;top:750px;width:11px;height:14.5px;background:#f0f0f0;border:1px solid #c8c8c8;"></div><svg style="position:absolute;left:240px;top:751.75px" width="7" height="12"><path d="M0 4.2L3.5 0.7L7 4.2ZM0 7.8L3.5 11.3L7 7.8Z" fill="#333"/></svg>
<div style="position:absolute;left:157px;top:773px;width:93px;height:17.5px;background:#fff;border:1px solid #7a7a7a;"></div><div style="position:absolute;left:157px;top:773px;width:78px;height:19.5px;overflow:hidden;"><div class="t" style="left:4.0px;top:1.6px;font-size:13.3px;line-height:17px;transform:scaleX(1.044);transform-origin:0 50%;font-weight:bold;">15,456 Мби</div></div><div style="position:absolute;left:237px;top:775px;width:11px;height:14.5px;background:#f0f0f0;border:1px solid #c8c8c8;"></div><svg style="position:absolute;left:240px;top:776.75px" width="7" height="12"><path d="M0 4.2L3.5 0.7L7 4.2ZM0 7.8L3.5 11.3L7 7.8Z" fill="#333"/></svg>
<div style="position:absolute;left:73.5px;top:800.5px;width:11px;height:11px;background:#fff;border:1px solid #333;"></div><svg style="position:absolute;left:73.5px;top:800.5px" width="13" height="13"><path d="M2.8 6.5L5.3 9.3L10.3 3.2" stroke="#111" stroke-width="1.3" fill="none"/></svg>
<div class="t" style="left:91.0px;top:800.0px;font-size:11px;line-height:14px;transform:scaleX(0.983);transform-origin:0 50%;">Обновлять инфо сигнале</div>
<div style="position:absolute;left:73.5px;top:824.5px;width:11px;height:11px;background:#fff;border:1px solid #333;"></div><svg style="position:absolute;left:73.5px;top:824.5px" width="13" height="13"><path d="M2.8 6.5L5.3 9.3L10.3 3.2" stroke="#111" stroke-width="1.3" fill="none"/></svg>
<div class="t" style="left:91.0px;top:824.0px;font-size:11px;line-height:14px;transform:scaleX(0.984);transform-origin:0 50%;">Обновлять инфо о модуляции</div>
<div class="t" style="left:101.5px;top:848.0px;font-size:11px;line-height:14px;transform:scaleX(0.977);transform-origin:0 50%;">Выполнено за 0.434 sec</div>
<div class="t" style="left:296.6px;top:701.0px;font-size:12px;line-height:16px;transform:scaleX(1.051);transform-origin:100% 50%;font-weight:bold;">Частота</div>
<div class="t" style="left:250.5px;top:725.2px;font-size:12px;line-height:16px;transform:scaleX(0.944);transform-origin:100% 50%;font-weight:bold;">Симв. скорость</div>
<div class="t" style="left:286.1px;top:750.8px;font-size:11px;line-height:14px;">Модуляция</div>
<div class="t" style="left:321.7px;top:775.2px;font-size:11px;line-height:14px;transform:scaleX(0.864);transform-origin:100% 50%;">FEC</div>
<div class="t" style="left:294.8px;top:799.7px;font-size:11px;line-height:14px;transform:scaleX(1.052);transform-origin:100% 50%;">IQ-спектр</div>
<div class="t" style="left:310.3px;top:824.0px;font-size:11px;line-height:14px;">RollOff</div>
<div class="t" style="left:255.6px;top:848.2px;font-size:11px;line-height:14px;transform:scaleX(0.993);transform-origin:100% 50%;text-decoration:underline;">Ширина несущей</div>
<div style="position:absolute;left:348px;top:699.3px;width:93px;height:17.5px;background:#fff;border:1px solid #7a7a7a;"></div><div style="position:absolute;left:348px;top:699.3px;width:78px;height:19.5px;overflow:hidden;"><div class="t" style="left:3.5px;top:1.6px;font-size:13.3px;line-height:17px;transform:scaleX(0.889);transform-origin:0 50%;font-weight:bold;">12712,533 МГц</div></div><div style="position:absolute;left:428px;top:701.3px;width:11px;height:14.5px;background:#f0f0f0;border:1px solid #c8c8c8;"></div><svg style="position:absolute;left:431px;top:703.05px" width="7" height="12"><path d="M0 4.2L3.5 0.7L7 4.2ZM0 7.8L3.5 11.3L7 7.8Z" fill="#333"/></svg>
<div style="position:absolute;left:348px;top:723.7px;width:93px;height:17.5px;background:#fff;border:1px solid #7a7a7a;"></div><div style="position:absolute;left:348px;top:723.7px;width:79px;height:19.5px;overflow:hidden;"><div class="t" style="left:4.0px;top:2.1px;font-size:12.5px;line-height:16px;transform:scaleX(0.985);transform-origin:0 50%;font-weight:bold;">5998 Кс</div></div><div style="position:absolute;left:428px;top:725.7px;width:11px;height:14.5px;background:#f0f0f0;border:1px solid #c8c8c8;"></div><svg style="position:absolute;left:431px;top:727.45px" width="7" height="12"><path d="M0 4.2L3.5 0.7L7 4.2ZM0 7.8L3.5 11.3L7 7.8Z" fill="#333"/></svg>
<div style="position:absolute;left:348px;top:748.2px;width:93px;height:17.5px;background:#e1e1e1;border:1px solid #adadad;"></div><div class="t" style="left:351.0px;top:751.2px;font-size:11px;line-height:14px;transform:scaleX(0.892);transform-origin:0 50%;">DVBS2/16APSK</div><svg style="position:absolute;left:429.0px;top:755.7px" width="8" height="4.5"><path d="M0 0H8L4.0 4.5Z" fill="#000"/></svg>
<div style="position:absolute;left:348px;top:772.6px;width:93px;height:17.5px;background:#e1e1e1;border:1px solid #adadad;"></div><div class="t" style="left:352.0px;top:775.6px;font-size:11px;line-height:14px;transform:scaleX(0.981);transform-origin:0 50%;">2/3</div><svg style="position:absolute;left:429.0px;top:780.1px" width="8" height="4.5"><path d="M0 0H8L4.0 4.5Z" fill="#000"/></svg>
<div style="position:absolute;left:348px;top:797px;width:93px;height:17.5px;background:#e1e1e1;border:1px solid #adadad;"></div><div class="t" style="left:351.5px;top:800.0px;font-size:11px;line-height:14px;transform:scaleX(0.959);transform-origin:0 50%;">Инверсия</div><svg style="position:absolute;left:429.0px;top:804.5px" width="8" height="4.5"><path d="M0 0H8L4.0 4.5Z" fill="#000"/></svg>
<div style="position:absolute;left:348px;top:821.4px;width:93px;height:17.5px;background:#e1e1e1;border:1px solid #adadad;"></div><div class="t" style="left:351.5px;top:824.4px;font-size:11px;line-height:14px;transform:scaleX(1.004);transform-origin:0 50%;">0.25</div><svg style="position:absolute;left:429.0px;top:828.9px" width="8" height="4.5"><path d="M0 0H8L4.0 4.5Z" fill="#000"/></svg>
<div style="position:absolute;left:348px;top:845.7px;width:93px;height:17.5px;background:#fff;border:1px solid #7a7a7a;"></div><div style="position:absolute;left:348px;top:845.7px;width:79px;height:19.5px;overflow:hidden;"><div class="t" style="left:4.5px;top:3.1px;font-size:11px;line-height:14px;transform:scaleX(0.961);transform-origin:0 50%;font-style:italic;">7,498 МГц</div></div><div style="position:absolute;left:428px;top:847.7px;width:11px;height:14.5px;background:#f0f0f0;border:1px solid #c8c8c8;"></div><svg style="position:absolute;left:431px;top:849.45px" width="7" height="12"><path d="M0 4.2L3.5 0.7L7 4.2ZM0 7.8L3.5 11.3L7 7.8Z" fill="#333"/></svg>
<div class="t" style="left:490.2px;top:702.0px;font-size:11px;line-height:14px;transform:scaleX(0.968);transform-origin:100% 50%;">Пилот</div>
<div style="position:absolute;left:527.3px;top:699.3px;width:74.7px;height:17.5px;background:#e1e1e1;border:1px solid #adadad;"></div><div class="t" style="left:530.5px;top:702.3px;font-size:11px;line-height:14px;transform:scaleX(0.989);transform-origin:0 50%;">Вкл.</div><svg style="position:absolute;left:590.0px;top:706.8px" width="8" height="4.5"><path d="M0 0H8L4.0 4.5Z" fill="#000"/></svg>
<div class="t" style="left:459.2px;top:726.2px;font-size:11px;line-height:14px;transform:scaleX(0.928);transform-origin:100% 50%;">Тип фрейма</div>
<div style="position:absolute;left:527.3px;top:723.7px;width:74.7px;height:17.5px;background:#e1e1e1;border:1px solid #adadad;"></div><div class="t" style="left:530.5px;top:726.8px;font-size:11px;line-height:14px;transform:scaleX(0.974);transform-origin:0 50%;">Длинный</div><svg style="position:absolute;left:590.0px;top:731.2px" width="8" height="4.5"><path d="M0 0H8L4.0 4.5Z" fill="#000"/></svg>
<div class="t" style="left:461.4px;top:750.8px;font-size:11px;line-height:14px;transform:scaleX(0.986);transform-origin:100% 50%;">Режим кода</div>
<div style="position:absolute;left:527.3px;top:748.2px;width:74.7px;height:17.5px;background:#e1e1e1;border:1px solid #adadad;"></div><div class="t" style="left:530.5px;top:751.2px;font-size:11px;line-height:14px;transform:scaleX(0.878);transform-origin:0 50%;">CCM</div><svg style="position:absolute;left:590.0px;top:755.7px" width="8" height="4.5"><path d="M0 0H8L4.0 4.5Z" fill="#000"/></svg>
<div class="t" style="left:466.3px;top:775.2px;font-size:11px;line-height:14px;transform:scaleX(1.019);transform-origin:100% 50%;">Тип потока</div>
<div style="position:absolute;left:527.3px;top:772.6px;width:74.7px;height:17.5px;background:#e1e1e1;border:1px solid #adadad;"></div><div class="t" style="left:530.5px;top:775.6px;font-size:11px;line-height:14px;transform:scaleX(0.986);transform-origin:0 50%;">Transport</div><svg style="position:absolute;left:590.0px;top:780.1px" width="8" height="4.5"><path d="M0 0H8L4.0 4.5Z" fill="#000"/></svg>
<div class="t" style="left:447.8px;top:799.7px;font-size:11px;line-height:14px;transform:scaleX(1.021);transform-origin:100% 50%;">Входной поток</div>
<div style="position:absolute;left:527.3px;top:797px;width:74.7px;height:17.5px;background:#e1e1e1;border:1px solid #adadad;"></div><div class="t" style="left:530.5px;top:800.0px;font-size:11px;line-height:14px;transform:scaleX(0.899);transform-origin:0 50%;">Single</div><svg style="position:absolute;left:590.0px;top:804.5px" width="8" height="4.5"><path d="M0 0H8L4.0 4.5Z" fill="#000"/></svg>
<div class="t" style="left:493.6px;top:824.0px;font-size:11px;line-height:14px;transform:scaleX(0.889);transform-origin:100% 50%;">ISSYI</div>
<div style="position:absolute;left:527.3px;top:821.4px;width:74.7px;height:17.5px;background:#e1e1e1;border:1px solid #adadad;"></div><div class="t" style="left:530.5px;top:824.4px;font-size:11px;line-height:14px;transform:scaleX(0.978);transform-origin:0 50%;">Выкл.</div><svg style="position:absolute;left:590.0px;top:828.9px" width="8" height="4.5"><path d="M0 0H8L4.0 4.5Z" fill="#000"/></svg>
<div class="t" style="left:498.5px;top:848.2px;font-size:11px;line-height:14px;transform:scaleX(0.840);transform-origin:100% 50%;">NPD</div>
<div style="position:absolute;left:527.3px;top:845.7px;width:74.7px;height:17.5px;background:#e1e1e1;border:1px solid #adadad;"></div><div class="t" style="left:530.5px;top:848.8px;font-size:11px;line-height:14px;transform:scaleX(0.978);transform-origin:0 50%;">Выкл.</div><svg style="position:absolute;left:590.0px;top:853.2px" width="8" height="4.5"><path d="M0 0H8L4.0 4.5Z" fill="#000"/></svg>
<div style="position:absolute;left:616px;top:84px;width:846px;height:621px;background:#f0f0f0;box-shadow:0 0 0 1px #9a9a9a, 0 3px 12px rgba(0,0,0,.28);"></div>
<div style="position:absolute;left:616px;top:84px;width:846px;height:50px;background:#fff;"></div>
<div style="position:absolute;left:624px;top:91px;width:16px;height:15px;background:#0c1450;overflow:hidden;"><div class="t" style="left:0.5px;top:1px;font-size:8.5px;line-height:13px;font-weight:bold;color:#fff;letter-spacing:-1.1px;">DVB</div></div>
<div class="t" style="left:645.3px;top:90.8px;font-size:11.8px;line-height:15px;transform:scaleX(0.963);transform-origin:0 50%;color:#9a9a9a;">Default -- TSReader Professional 2.8.48</div>
<svg style="position:absolute;left:0;top:0" width="1813" height="1017"><path d="M1342 98H1352.5" stroke="#777" stroke-width="1"/><rect x="1388" y="93" width="10" height="10" fill="none" stroke="#777" stroke-width="1"/><path d="M1434 93L1444 103M1444 93L1434 103" stroke="#777" stroke-width="1.1"/></svg>
<div class="t" style="left:623.3px;top:116.5px;font-size:11.8px;line-height:15px;transform:scaleX(0.947);transform-origin:0 50%;color:#6a6a6a;">File</div>
<div class="t" style="left:655.5px;top:116.5px;font-size:11.8px;line-height:15px;transform:scaleX(0.976);transform-origin:0 50%;color:#6a6a6a;">Export</div>
<div class="t" style="left:703.3px;top:116.5px;font-size:11.8px;line-height:15px;transform:scaleX(0.986);transform-origin:0 50%;color:#6a6a6a;">View</div>
<div class="t" style="left:742.5px;top:116.5px;font-size:11.8px;line-height:15px;transform:scaleX(0.954);transform-origin:0 50%;color:#6a6a6a;">Record</div>
<div class="t" style="left:793.6px;top:116.5px;font-size:11.8px;line-height:15px;transform:scaleX(0.973);transform-origin:0 50%;color:#6a6a6a;">Playback</div>
<div class="t" style="left:854.2px;top:116.5px;font-size:11.8px;line-height:15px;transform:scaleX(0.971);transform-origin:0 50%;color:#6a6a6a;">Forward</div>
<div class="t" style="left:911.0px;top:116.5px;font-size:11.8px;line-height:15px;color:#6a6a6a;">Plugins</div>
<div class="t" style="left:964.2px;top:116.5px;font-size:11.8px;line-height:15px;transform:scaleX(0.969);transform-origin:0 50%;color:#6a6a6a;">Settings</div>
<div class="t" style="left:1020.0px;top:116.5px;font-size:11.8px;line-height:15px;transform:scaleX(1.022);transform-origin:0 50%;color:#6a6a6a;">Help</div>
<div style="position:absolute;left:617px;top:134px;width:238px;height:300px;background:#fff;border:1px solid #828790;border-right-color:#a0a0a0;"></div>
<svg style="position:absolute;left:0;top:0" width="1813" height="1017"><path d="M628.5 149V324 M647.5 153V180 M666.5 189V270 M628.5 144.5H639 M647.5 162.5H658 M647.5 180.5H658 M666.5 198.5H677 M666.5 216.5H677 M666.5 234.5H677 M666.5 252.5H677 M666.5 270.5H677 M628.5 288.5H639 M628.5 306.5H639 M628.5 324.5H639" stroke="#808080" stroke-width="1" stroke-dasharray="1 1" fill="none" shape-rendering="crispEdges"/></svg>
<svg style="position:absolute;left:639px;top:135.5px" width="17" height="17" viewBox="0 0 17 17"><path d="M3.5 4.5H13V2L15.8 4.3V13.2L13 16H3.5Z" fill="#111"/><path d="M1.5 2.2L3.2 0.6H13.2L15 2.4V12.5L13 14.6H1.5Z" fill="#9cc890"/><path d="M2 2.5H14.6M2 1.2H13.6M14 3V13M15 3V12" stroke="#3c7c3c" stroke-width="1" stroke-dasharray="1 1" opacity=".7"/><rect x="0.7" y="4" width="11.2" height="9" fill="#f4f4c4" stroke="#222" stroke-width=".8"/><text x="6.2" y="11.6" font-size="8" font-weight="bold" text-anchor="middle" fill="#111" textLength="9" lengthAdjust="spacingAndGlyphs">PA</text></svg>
<div class="t" style="left:660.6px;top:137.1px;font-size:10.8px;line-height:14px;transform:scaleX(0.975);transform-origin:0 50%;">PAT PID 0</div>
<svg style="position:absolute;left:624.0px;top:140.0px" width="9" height="9"><rect x="0.5" y="0.5" width="8" height="8" fill="#fff" stroke="#8a8a8a"/><path d="M2.5 4.5H6.5" stroke="#333" stroke-width="1"/></svg>
<svg style="position:absolute;left:658px;top:153.53px" width="17" height="17" viewBox="0 0 17 17"><path d="M3.5 4.5H13V2L15.8 4.3V13.2L13 16H3.5Z" fill="#111"/><path d="M1.5 2.2L3.2 0.6H13.2L15 2.4V12.5L13 14.6H1.5Z" fill="#9cc890"/><path d="M2 2.5H14.6M2 1.2H13.6M14 3V13M15 3V12" stroke="#3c7c3c" stroke-width="1" stroke-dasharray="1 1" opacity=".7"/><rect x="0.7" y="4" width="11.2" height="9" fill="#f4f4c4" stroke="#222" stroke-width=".8"/><text x="6.2" y="11.6" font-size="8" font-weight="bold" text-anchor="middle" fill="#111" textLength="9" lengthAdjust="spacingAndGlyphs">PM</text></svg>
<div class="t" style="left:679.6px;top:155.1px;font-size:10.8px;line-height:14px;transform:scaleX(0.975);transform-origin:0 50%;">PMT PID 16 – Network</div>
<svg style="position:absolute;left:658px;top:171.56px" width="17" height="17" viewBox="0 0 17 17"><path d="M3.5 4.5H13V2L15.8 4.3V13.2L13 16H3.5Z" fill="#111"/><path d="M1.5 2.2L3.2 0.6H13.2L15 2.4V12.5L13 14.6H1.5Z" fill="#9cc890"/><path d="M2 2.5H14.6M2 1.2H13.6M14 3V13M15 3V12" stroke="#3c7c3c" stroke-width="1" stroke-dasharray="1 1" opacity=".7"/><rect x="0.7" y="4" width="11.2" height="9" fill="#f4f4c4" stroke="#222" stroke-width=".8"/><text x="6.2" y="11.6" font-size="8" font-weight="bold" text-anchor="middle" fill="#111" textLength="9" lengthAdjust="spacingAndGlyphs">PM</text></svg>
<div class="t" style="left:679.6px;top:173.2px;font-size:10.8px;line-height:14px;transform:scaleX(0.975);transform-origin:0 50%;">PMT PID 2048 – Progr. 1</div>
<svg style="position:absolute;left:643.0px;top:176.06px" width="9" height="9"><rect x="0.5" y="0.5" width="8" height="8" fill="#fff" stroke="#8a8a8a"/><path d="M2.5 4.5H6.5" stroke="#333" stroke-width="1"/></svg>
<svg style="position:absolute;left:677px;top:189.59px" width="17" height="17" viewBox="0 0 17 17"><path d="M3.5 4.5H13V2L15.8 4.3V13.2L13 16H3.5Z" fill="#111"/><path d="M1.5 2.2L3.2 0.6H13.2L15 2.4V12.5L13 14.6H1.5Z" fill="#9cc890"/><path d="M2 2.5H14.6M2 1.2H13.6M14 3V13M15 3V12" stroke="#3c7c3c" stroke-width="1" stroke-dasharray="1 1" opacity=".7"/><rect x="0.7" y="4" width="11.2" height="9" fill="#f4f4c4" stroke="#222" stroke-width=".8"/><text x="6.2" y="11.6" font-size="8" font-weight="bold" text-anchor="middle" fill="#111" textLength="9" lengthAdjust="spacingAndGlyphs">SD</text></svg>
<div class="t" style="left:698.6px;top:191.2px;font-size:10.8px;line-height:14px;transform:scaleX(0.975);transform-origin:0 50%;">SDT: UKI 1940  P1</div>
<svg style="position:absolute;left:677px;top:207.62px" width="17" height="17" viewBox="0 0 17 17"><rect x="3" y="3" width="12.5" height="12.5" fill="#4d5a3c"/><rect x="3" y="1" width="11" height="12.5" fill="#cfe0c0" stroke="#3f4a2c" stroke-width="1"/><path d="M0 5L4 6.5H12V11.5H4L0 12Z" fill="#c020c0" stroke="#401040" stroke-width=".7"/></svg>
<div class="t" style="left:698.6px;top:209.2px;font-size:10.8px;line-height:14px;transform:scaleX(0.975);transform-origin:0 50%;">ES PID 512</div>
<svg style="position:absolute;left:662.0px;top:212.12px" width="9" height="9"><rect x="0.5" y="0.5" width="8" height="8" fill="#fff" stroke="#8a8a8a"/><path d="M2.5 4.5H6.5" stroke="#333" stroke-width="1"/><path d="M4.5 2.5V6.5" stroke="#333" stroke-width="1"/></svg>
<svg style="position:absolute;left:677px;top:225.65px" width="17" height="17" viewBox="0 0 17 17"><rect x="3" y="3" width="12.5" height="12.5" fill="#4d5a3c"/><rect x="3" y="1" width="11" height="12.5" fill="#cfe0c0" stroke="#3f4a2c" stroke-width="1"/><path d="M0 7.5L5 2.5V12.5Z" fill="#c020c0" stroke="#401040" stroke-width=".6"/><rect x="5" y="5" width="2.5" height="5" fill="#c020c0"/></svg>
<div class="t" style="left:698.6px;top:227.2px;font-size:10.8px;line-height:14px;transform:scaleX(0.975);transform-origin:0 50%;">ES PID 4112</div>
<svg style="position:absolute;left:677px;top:243.68px" width="17" height="17" viewBox="0 0 17 17"><rect x="3" y="3" width="12.5" height="12.5" fill="#4d5a3c"/><rect x="3" y="1" width="11" height="12.5" fill="#cfe0c0" stroke="#3f4a2c" stroke-width="1"/><path d="M0 7.5L5 2.5V12.5Z" fill="#c020c0" stroke="#401040" stroke-width=".6"/><rect x="5" y="5" width="2.5" height="5" fill="#c020c0"/></svg>
<div class="t" style="left:698.6px;top:245.3px;font-size:10.8px;line-height:14px;transform:scaleX(0.975);transform-origin:0 50%;">ES PID 4128</div>
<svg style="position:absolute;left:677px;top:261.71000000000004px" width="17" height="17" viewBox="0 0 17 17"><rect x="3" y="3" width="12.5" height="12.5" fill="#4d5a3c"/><rect x="3" y="1" width="11" height="12.5" fill="#cfe0c0" stroke="#3f4a2c" stroke-width="1"/><circle cx="7" cy="8" r="6.5" fill="#e020e0" stroke="#401040" stroke-width=".8"/><path d="M7 8H3M7 8V4" stroke="#601060" stroke-width=".8"/></svg>
<div class="t" style="left:698.6px;top:263.3px;font-size:10.8px;line-height:14px;transform:scaleX(0.975);transform-origin:0 50%;">PCR PID 8190</div>
<svg style="position:absolute;left:639px;top:279.74px" width="17" height="17" viewBox="0 0 17 17"><path d="M3.5 4.5H13V2L15.8 4.3V13.2L13 16H3.5Z" fill="#111"/><path d="M1.5 2.2L3.2 0.6H13.2L15 2.4V12.5L13 14.6H1.5Z" fill="#9cc890"/><path d="M2 2.5H14.6M2 1.2H13.6M14 3V13M15 3V12" stroke="#3c7c3c" stroke-width="1" stroke-dasharray="1 1" opacity=".7"/><rect x="0.7" y="4" width="11.2" height="9" fill="#f4f4c4" stroke="#222" stroke-width=".8"/><text x="6.2" y="11.6" font-size="8" font-weight="bold" text-anchor="middle" fill="#111" textLength="9" lengthAdjust="spacingAndGlyphs">SD</text></svg>
<div class="t" style="left:660.6px;top:281.3px;font-size:10.8px;line-height:14px;transform:scaleX(0.975);transform-origin:0 50%;">SDT PID 17 &lt;1&gt;</div>
<svg style="position:absolute;left:624.0px;top:284.24px" width="9" height="9"><rect x="0.5" y="0.5" width="8" height="8" fill="#fff" stroke="#8a8a8a"/><path d="M2.5 4.5H6.5" stroke="#333" stroke-width="1"/><path d="M4.5 2.5V6.5" stroke="#333" stroke-width="1"/></svg>
<svg style="position:absolute;left:639px;top:297.77px" width="17" height="17" viewBox="0 0 17 17"><path d="M3.5 4.5H13V2L15.8 4.3V13.2L13 16H3.5Z" fill="#111"/><path d="M1.5 2.2L3.2 0.6H13.2L15 2.4V12.5L13 14.6H1.5Z" fill="#9cc890"/><path d="M2 2.5H14.6M2 1.2H13.6M14 3V13M15 3V12" stroke="#3c7c3c" stroke-width="1" stroke-dasharray="1 1" opacity=".7"/><rect x="0.7" y="4" width="11.2" height="9" fill="#f4f4c4" stroke="#222" stroke-width=".8"/><text x="6.2" y="11.6" font-size="8" font-weight="bold" text-anchor="middle" fill="#111" textLength="9" lengthAdjust="spacingAndGlyphs">CA</text></svg>
<div class="t" style="left:660.6px;top:299.4px;font-size:10.8px;line-height:14px;transform:scaleX(0.975);transform-origin:0 50%;">CAT PID 1</div>
<svg style="position:absolute;left:639px;top:315.8px" width="17" height="17" viewBox="0 0 17 17"><path d="M3.5 4.5H13V2L15.8 4.3V13.2L13 16H3.5Z" fill="#111"/><path d="M1.5 2.2L3.2 0.6H13.2L15 2.4V12.5L13 14.6H1.5Z" fill="#9cc890"/><path d="M2 2.5H14.6M2 1.2H13.6M14 3V13M15 3V12" stroke="#3c7c3c" stroke-width="1" stroke-dasharray="1 1" opacity=".7"/><rect x="0.7" y="4" width="11.2" height="9" fill="#f4f4c4" stroke="#222" stroke-width=".8"/><text x="6.2" y="11.6" font-size="8" font-weight="bold" text-anchor="middle" fill="#111" textLength="9" lengthAdjust="spacingAndGlyphs">NI</text></svg>
<div class="t" style="left:660.6px;top:317.4px;font-size:10.8px;line-height:14px;transform:scaleX(0.975);transform-origin:0 50%;">NIT PID 16 &lt;1&gt;</div>
<svg style="position:absolute;left:624.0px;top:320.3px" width="9" height="9"><rect x="0.5" y="0.5" width="8" height="8" fill="#fff" stroke="#8a8a8a"/><path d="M2.5 4.5H6.5" stroke="#333" stroke-width="1"/><path d="M4.5 2.5V6.5" stroke="#333" stroke-width="1"/></svg>
<div style="position:absolute;left:861.5px;top:134px;width:365.5px;height:220px;background:#fff;border:1px solid #828790;"></div>
<div class="t" style="left:866.2px;top:137.0px;font-size:11px;line-height:14px;transform:scaleX(0.968);transform-origin:0 50%;">Program Number: 1</div>
<div class="t" style="left:866.2px;top:152.0px;font-size:11px;line-height:14px;transform:scaleX(0.968);transform-origin:0 50%;">PCR on PID 8190 (0x1ffe)</div>
<div class="t" style="left:866.2px;top:167.1px;font-size:11px;line-height:14px;transform:scaleX(0.968);transform-origin:0 50%;">PMT Version: 0</div>
<div class="t" style="left:866.2px;top:182.1px;font-size:11px;line-height:14px;transform:scaleX(0.968);transform-origin:0 50%;">Service name: UKI 1940  P1</div>
<div class="t" style="left:866.2px;top:212.1px;font-size:11px;line-height:14px;transform:scaleX(0.968);transform-origin:0 50%;">Stream Type: 0x1b H.264 Video</div>
<div class="t" style="left:869.5px;top:227.2px;font-size:11px;line-height:14px;transform:scaleX(0.968);transform-origin:0 50%;">Elementary Stream PID 512 (0x0200)</div>
<div class="t" style="left:866.2px;top:257.2px;font-size:11px;line-height:14px;transform:scaleX(0.968);transform-origin:0 50%;">Stream Type: 0x03 MPEG-1 Audio</div>
<div class="t" style="left:869.5px;top:272.3px;font-size:11px;line-height:14px;transform:scaleX(0.968);transform-origin:0 50%;">Elementary Stream PID 4112 (0x1010)</div>
<div class="t" style="left:866.2px;top:302.3px;font-size:11px;line-height:14px;transform:scaleX(0.968);transform-origin:0 50%;">Stream Type: 0x03 MPEG-1 Audio</div>
<div class="t" style="left:869.5px;top:317.4px;font-size:11px;line-height:14px;transform:scaleX(0.968);transform-origin:0 50%;">Elementary Stream PID 4128 (0x1020)</div>
<svg style="position:absolute;left:1233px;top:139px" width="10" height="214"><path d="M1 6.5L5 2.5L9 6.5M1 207L5 211L9 207" stroke="#bdbdbd" stroke-width="1.6" fill="none"/></svg>
<div style="position:absolute;left:865px;top:363px;width:384px;height:60px;border:1px solid #dcdcdc;"></div>
<div style="position:absolute;left:869px;top:357px;width:60px;height:12px;background:#f0f0f0;"></div>
<div class="t" style="left:871.0px;top:356.3px;font-size:11.3px;line-height:15px;transform:scaleX(0.964);transform-origin:0 50%;">Active PIDs</div>
<div style="position:absolute;left:929px;top:365px;width:317px;height:14px;background:#f0f0f0;"></div>
<div style="position:absolute;left:930.3px;top:365.5px;width:11px;height:11px;background:#fff;border:1px solid #333;"></div>
<div class="t" style="left:946.5px;top:364.5px;font-size:11.3px;line-height:15px;transform:scaleX(0.933);transform-origin:0 50%;">Disabled</div>
<div style="position:absolute;left:996.3px;top:365.5px;width:11px;height:11px;background:#fff;border:1px solid #333;"></div>
<div class="t" style="left:1012.8px;top:364.5px;font-size:11.3px;line-height:15px;transform:scaleX(0.944);transform-origin:0 50%;">Sort Decending</div>
<svg style="position:absolute;left:1092px;top:365px" width="14" height="14"><circle cx="6.5" cy="6.7" r="5.7" fill="#fff" stroke="#333"/><circle cx="6.5" cy="6.7" r="3" fill="#222"/></svg>
<div class="t" style="left:1108.8px;top:364.5px;font-size:11.3px;line-height:15px;transform:scaleX(0.931);transform-origin:0 50%;">Sort by Rate</div>
<svg style="position:absolute;left:1173px;top:365px" width="14" height="14"><circle cx="6.5" cy="6.7" r="5.7" fill="#fff" stroke="#333"/></svg>
<div class="t" style="left:1189.6px;top:364.5px;font-size:11.3px;line-height:15px;transform:scaleX(0.917);transform-origin:0 50%;">Sort by PID</div>
<div style="position:absolute;left:872px;top:383px;width:338px;height:12px;background:#00e000;"></div>
<div class="t" style="left:1094.4px;top:383.5px;font-size:9.5px;line-height:12px;transform:scaleX(0.979);transform-origin:0 50%;color:#134213;">512 (92.89% ~ 14.35 Mbps)</div>
<svg style="position:absolute;left:1235px;top:383px" width="10" height="8"><path d="M1 6L5 2L9 6" stroke="#444" stroke-width="1.6" fill="none"/></svg>
<div style="position:absolute;left:1255px;top:141px;width:206px;height:560px;border:1px solid #dcdcdc;border-right:none;"></div>
<div style="position:absolute;left:1259px;top:134px;width:76px;height:13px;background:#f0f0f0;"></div>
<div class="t" style="left:1261.0px;top:133.2px;font-size:11.3px;line-height:15px;transform:scaleX(0.975);transform-origin:0 50%;">Video Decode</div>
<svg style="position:absolute;left:0;top:0" width="1813" height="1017"><rect x="1261" y="154" width="184" height="526" fill="#000"/><rect x="1261.5" y="154" width="30.5" height="180" fill="#ffffff"/><rect x="1292" y="154" width="29.5" height="180" fill="#c0c014"/><rect x="1321.5" y="154" width="30.5" height="180" fill="#14c0c0"/><rect x="1352" y="154" width="29.5" height="180" fill="#14c014"/><rect x="1381.5" y="154" width="29.5" height="180" fill="#c014c0"/><rect x="1411" y="154" width="29" height="180" fill="#c01414"/><rect x="1440" y="154" width="5" height="180" fill="#1414c0"/><rect x="1273" y="173" width="172" height="136.7" fill="#000"/><rect x="1261" y="154" width="1" height="180" fill="#000"/><path d="M1264 359.5H1445M1264 373.5H1445" stroke="#4f9a4f" stroke-width="1"/><path d="M1264 373.5H1445M1264 426.5H1445" stroke="#c8c890" stroke-width="1"/><path d="M1264 412.5H1445" stroke="#4f9a4f" stroke-width="1"/></svg>
<div class="t" style="left:1261.0px;top:154.0px;font-size:13px;line-height:17px;transform:scaleX(1.043);transform-origin:0 50%;font-weight:bold;color:#0a0aa8;">1 – UKI 1940  P1</div>
<div class="t" style="left:1261.0px;top:335.5px;font-size:13px;line-height:17px;transform:scaleX(1.043);transform-origin:0 50%;font-weight:bold;color:#0808a0;">1 – UKI 1940  P1</div>
<div class="t" style="left:1261.0px;top:385.5px;font-size:13px;line-height:17px;transform:scaleX(1.043);transform-origin:0 50%;font-weight:bold;color:#06066a;">1 – UKI 1940  P1</div>
<div class="t" style="left:1286.0px;top:197.5px;font-size:62px;line-height:81px;font-weight:bold;color:#fa2c0c;transform:skewX(-12deg) scaleX(.98);transform-origin:0 50%;-webkit-text-stroke:1.6px #fa2c0c;">?</div>
<div style="position:absolute;left:1328px;top:215px;width:117px;height:52px;overflow:hidden;"><div class="t" style="left:0.8px;top:0.5px;font-size:20.5px;line-height:27px;transform:scaleX(1.018);transform-origin:0 50%;font-weight:bold;color:#e83020;-webkit-text-stroke:.5px #e83020;">Video decoding</div><div class="t" style="left:31.8px;top:25.5px;font-size:20.5px;line-height:27px;transform:scaleX(1.018);transform-origin:0 50%;font-weight:bold;color:#e83020;-webkit-text-stroke:.5px #e83020;">crashed</div></div>
<div style="position:absolute;left:1445px;top:143px;width:17px;height:537px;background:#f0f0f0;"></div>
<div style="position:absolute;left:1451px;top:157px;width:10px;height:18px;background:#cdcdcd;"></div>
<svg style="position:absolute;left:1451px;top:145px" width="10" height="8"><path d="M1 6L5 2L9 6" stroke="#333" stroke-width="1.6" fill="none"/></svg>
<svg style="position:absolute;left:1451px;top:668px" width="10" height="8"><path d="M1 2L5 6L9 2" stroke="#333" stroke-width="1.6" fill="none"/></svg>
<div style="position:absolute;left:616px;top:681px;width:846px;height:24px;background:#f0f0f0;border-top:1px solid #d7d7d7;"></div>
<svg style="position:absolute;left:1450px;top:694px" width="10" height="10"><path d="M8 1v2M8 4.5v2M4.5 4.5v2h2v-2zM8 8v2M4.5 8v2M1 8v2" stroke="#b0b0b0" stroke-width="2" stroke-dasharray="2 1.5" fill="none"/></svg>
<div style="position:absolute;left:617.5px;top:393.5px;width:814.5px;height:601.5px;background:#f0f0f0;box-shadow:0 0 0 1px #6f6f6f, 0 4px 18px rgba(0,0,0,.5);"></div>
<div style="position:absolute;left:617.5px;top:393.5px;width:814.5px;height:51.5px;background:#fff;"></div>
<svg style="position:absolute;left:626px;top:400px" width="16" height="17" viewBox="0 0 16 17"><path d="M8 0.5L12.6 12.5H3.4Z" fill="#f48b00"/><path d="M5.9 6H10.1L11 8.4H5Z" fill="#fff"/><path d="M6.9 3.2H9.1L9.5 4.3H6.5Z" fill="#fff"/><path d="M1.5 16L3 11.8H13L14.5 16Z" fill="#f07800"/></svg>
<div class="t" style="left:647.5px;top:401.1px;font-size:11.8px;line-height:15px;transform:scaleX(0.970);transform-origin:0 50%;">127.0.0.1:1234 - Медиапроигрыватель VLC</div>
<svg style="position:absolute;left:0;top:0" width="1813" height="1017"><path d="M1313 408.5H1323.5" stroke="#111" stroke-width="1"/><rect x="1358" y="403.5" width="10" height="10" fill="none" stroke="#111" stroke-width="1"/><path d="M1404 403.5L1414 413.5M1414 403.5L1404 413.5" stroke="#111" stroke-width="1.1"/></svg>
<div class="t" style="left:626.0px;top:428.1px;font-size:11.8px;line-height:15px;transform:scaleX(0.983);transform-origin:0 50%;">Медиа</div>
<div class="t" style="left:677.8px;top:428.1px;font-size:11.8px;line-height:15px;transform:scaleX(0.996);transform-origin:0 50%;">Воспроизведение</div>
<div class="t" style="left:791.3px;top:428.1px;font-size:11.8px;line-height:15px;transform:scaleX(1.018);transform-origin:0 50%;">Аудио</div>
<div class="t" style="left:841.2px;top:428.1px;font-size:11.8px;line-height:15px;transform:scaleX(0.957);transform-origin:0 50%;">Видео</div>
<div class="t" style="left:890.2px;top:428.1px;font-size:11.8px;line-height:15px;transform:scaleX(1.005);transform-origin:0 50%;">Субтитры</div>
<div class="t" style="left:960.3px;top:428.1px;font-size:11.8px;line-height:15px;transform:scaleX(1.026);transform-origin:0 50%;">Инструменты</div>
<div class="t" style="left:1052.3px;top:428.1px;font-size:11.8px;line-height:15px;transform:scaleX(0.946);transform-origin:0 50%;">Вид</div>
<div class="t" style="left:1088.5px;top:428.1px;font-size:11.8px;line-height:15px;transform:scaleX(1.075);transform-origin:0 50%;">Помощь</div>
<svg style="position:absolute;left:617px;top:445px" width="816" height="500" viewBox="0 0 1660 1017" preserveAspectRatio="none"><defs>
<clipPath id="vclip"><rect x="2" y="40" width="1656" height="928"/></clipPath>
<filter id="vb" x="-2%" y="-2%" width="104%" height="104%"><feGaussianBlur stdDeviation="1.6"/></filter>
<filter id="vb4" x="-10%" y="-10%" width="120%" height="120%"><feGaussianBlur stdDeviation="5"/></filter>
<linearGradient id="pipe1" x1="0" y1="0" x2="0" y2="1"><stop offset="0" stop-color="#7a7a6c"/><stop offset=".25" stop-color="#e4e4d2"/><stop offset=".5" stop-color="#a8a898"/><stop offset="1" stop-color="#3c3c36"/></linearGradient>
<linearGradient id="pipe2" x1="0" y1="0" x2="0" y2="1"><stop offset="0" stop-color="#4a4a44"/><stop offset=".3" stop-color="#8e8e82"/><stop offset=".6" stop-color="#5e5e56"/><stop offset="1" stop-color="#2c2c28"/></linearGradient>
<linearGradient id="tarp" x1="0" y1="0" x2="1" y2="0.25"><stop offset="0" stop-color="#1c1a19"/><stop offset=".3" stop-color="#5a544e"/><stop offset=".85" stop-color="#90877c"/><stop offset="1" stop-color="#3a3632"/></linearGradient>
<linearGradient id="jacketb" x1="0" y1="0" x2="1" y2="1"><stop offset="0" stop-color="#1c74e4"/><stop offset=".6" stop-color="#1466d6"/><stop offset="1" stop-color="#0e50b4"/></linearGradient>
<linearGradient id="plat" x1="0" y1="0" x2="0" y2="1"><stop offset="0" stop-color="#2c3632"/><stop offset="1" stop-color="#1c2522"/></linearGradient>
<linearGradient id="mesh" x1="0" y1="1" x2="1" y2="0"><stop offset="0" stop-color="#0a0a09"/><stop offset=".6" stop-color="#1e1b18"/><stop offset="1" stop-color="#2e2923"/></linearGradient>
<linearGradient id="stone" x1="0" y1="0" x2="1" y2="0"><stop offset="0" stop-color="#86826c"/><stop offset=".6" stop-color="#6c6856"/><stop offset="1" stop-color="#3c3a30"/></linearGradient>
<linearGradient id="face" x1="0" y1="0" x2="1" y2="0"><stop offset="0" stop-color="#c49a84"/><stop offset=".6" stop-color="#b08068"/><stop offset="1" stop-color="#6e4a3c"/></linearGradient>
<linearGradient id="wood" x1="0" y1="0" x2="1" y2="0"><stop offset="0" stop-color="#7a5026"/><stop offset="1" stop-color="#c89458"/></linearGradient>
<radialGradient id="glow"><stop offset="0" stop-color="#fff"/><stop offset=".25" stop-color="#f4f0ff" stop-opacity=".95"/><stop offset="1" stop-color="#8080c0" stop-opacity="0"/></radialGradient>
</defs><rect x="0" y="0" width="1660" height="1017" fill="#000"/><g clip-path="url(#vclip)"><g filter="url(#vb)"><rect x="0" y="40" width="1660" height="930" fill="#030305"/><polygon points="1290,440 1660,420 1660,640 1560,600 1300,530" fill="#1c2424" /><polygon points="1440,345 1660,300 1660,540 1440,495" fill="#54302a" /><polygon points="1440,385 1660,355 1660,368 1440,398" fill="#80604c" /><polygon points="1440,430 1660,400 1660,415 1440,445" fill="#80604c" /><polygon points="1440,475 1660,445 1660,460 1440,490" fill="#80604c" /><polygon points="1420,335 1660,285 1660,305 1430,350" fill="#2c3038" /><polygon points="1538,402 1584,398 1584,482 1538,480" fill="#dfe6d8" /><polygon points="1545,410 1577,407 1577,474 1545,472" fill="#7e9478" /><polygon points="1420,380 1470,375 1470,490 1420,485" fill="#15181a" /><path d="M240 370H535M800 372H1040" stroke="#8a7a34" stroke-width="6" stroke-dasharray="4 10" opacity=".8" fill="none"/><path d="M240 440H535M800 440H1040" stroke="#5a5228" stroke-width="4" stroke-dasharray="3 7" opacity=".8" fill="none"/><path d="M240 375V445M300 330V445M430 330V445M510 330V445" stroke="#5a5228" stroke-width="3" fill="none"/><polygon points="240,375 1040,375 1040,450 240,450" fill="#0a120e" opacity=".55"/><polygon points="535,300 800,300 800,460 535,460" fill="#0a1410" /><path d="M545 328H790M545 372H790M560 416H780" stroke="#a08c3a" stroke-width="6" stroke-dasharray="5 9" opacity=".8" fill="none"/><path d="M560 245V320M640 235V320M690 235V320M770 250V320M600 300V330M735 300V330" stroke="#a08c38" stroke-width="4" stroke-dasharray="6 5" fill="none"/><circle cx="660" cy="265" r="10" fill="#b8a44a"/><path d="M535 300L560 270L585 300M745 300L772 268L800 300M610 280L660 235L712 280" stroke="#8e7c30" stroke-width="4" fill="none"/><circle cx="268" cy="290" r="9" fill="#6a2410"/><circle cx="252" cy="268" r="3" fill="#b0b0ff"/><circle cx="290" cy="240" r="2.5" fill="#c06060"/><ellipse cx="133" cy="225" rx="34" ry="32" fill="#7c8068"/><polygon points="118,250 148,250 152,285 112,285" fill="#70745e" /><ellipse cx="133" cy="185" rx="10" ry="12" fill="#7c8068"/><polygon points="98,285 180,285 180,335 98,335" fill="#6e725c" /><polygon points="1035,302 1095,302 1095,462 1035,462" fill="url(#stone)" /><polygon points="1026,295 1104,295 1104,310 1026,310" fill="#827e68" /><ellipse cx="1067" cy="252" rx="22" ry="28" fill="#8e8a76"/><ellipse cx="1067" cy="222" rx="7" ry="8" fill="#8e8a76"/><polygon points="1057,275 1077,275 1082,296 1052,296" fill="#7c7866" /><polygon points="1215,332 1275,332 1275,472 1215,472" fill="url(#stone)" /><polygon points="1206,325 1284,325 1284,340 1206,340" fill="#827e68" /><polygon points="1372,337 1432,337 1432,482 1372,482" fill="url(#stone)" /><polygon points="1363,330 1441,330 1441,345 1363,345" fill="#827e68" /><polygon points="1235,290 1265,290 1258,310 1242,310" fill="#2c3034" /><path d="M1100 368H1212" stroke="#a09040" stroke-width="5" stroke-dasharray="4 7" fill="none"/><path d="M1278 358H1370" stroke="#c0aa50" stroke-width="8" stroke-dasharray="3 4" fill="none"/><polygon points="1095,435 1215,435 1215,462 1095,462" fill="#5c4636" /><polygon points="1278,365 1370,365 1370,470 1278,470" fill="#11161a" /><path d="M1282 368V468M1292 368V468M1302 368V468M1312 368V468M1322 368V468M1332 368V468M1342 368V468M1352 368V468M1362 368V468" stroke="#3c4648" stroke-width="1.6"/><circle cx="1483" cy="349" r="30" fill="url(#glow)"/><circle cx="1483" cy="349" r="9" fill="#fff"/><circle cx="1100" cy="338" r="9" fill="url(#glow)"/><circle cx="1100" cy="338" r="3.5" fill="#fff"/><circle cx="1478" cy="378" r="5" fill="#c0c8ff"/><polygon points="352,453 539,450 539,474 352,478" fill="#76745e" /><polygon points="345,478 560,462 672,468 672,565 430,595 410,540" fill="#2e3a2a" /><polygon points="1030,462 1200,470 1295,495 1300,532 1045,552" fill="#34402c" /><circle cx="430" cy="533" r="4.8" fill="#486830" opacity=".5"/><circle cx="504" cy="537" r="2.5" fill="#b8b040" opacity=".5"/><circle cx="619" cy="500" r="3.0" fill="#70a040" opacity=".5"/><circle cx="581" cy="532" r="3.7" fill="#f0f0f0" opacity=".5"/><circle cx="556" cy="487" r="4.7" fill="#9a68a8" opacity=".5"/><circle cx="520" cy="555" r="2.9" fill="#d8d048" opacity=".5"/><circle cx="601" cy="565" r="3.7" fill="#c8c8e8" opacity=".5"/><circle cx="581" cy="571" r="3.5" fill="#e0a8c0" opacity=".5"/><circle cx="607" cy="521" r="4.7" fill="#9a68a8" opacity=".5"/><circle cx="386" cy="486" r="3.1" fill="#70a040" opacity=".5"/><circle cx="567" cy="560" r="3.6" fill="#c8c8e8" opacity=".5"/><circle cx="618" cy="536" r="4.0" fill="#f0f0f0" opacity=".5"/><circle cx="539" cy="574" r="4.6" fill="#e8e8d8" opacity=".5"/><circle cx="667" cy="547" r="4.2" fill="#9a68a8" opacity=".5"/><circle cx="458" cy="532" r="3.9" fill="#b8b040" opacity=".5"/><circle cx="580" cy="494" r="3.2" fill="#b8b040" opacity=".5"/><circle cx="394" cy="525" r="2.7" fill="#88b050" opacity=".5"/><circle cx="607" cy="517" r="2.6" fill="#9a68a8" opacity=".5"/><circle cx="490" cy="518" r="2.6" fill="#d8d048" opacity=".5"/><circle cx="581" cy="508" r="3.8" fill="#c8c8e8" opacity=".5"/><circle cx="670" cy="506" r="2.8" fill="#d8d048" opacity=".5"/><circle cx="524" cy="579" r="3.2" fill="#e0a8c0" opacity=".5"/><circle cx="438" cy="549" r="3.3" fill="#486830" opacity=".5"/><circle cx="474" cy="523" r="3.5" fill="#f0f0f0" opacity=".5"/><circle cx="628" cy="548" r="4.1" fill="#d8d048" opacity=".5"/><circle cx="651" cy="528" r="4.1" fill="#e0a8c0" opacity=".5"/><circle cx="580" cy="578" r="4.9" fill="#e0a8c0" opacity=".5"/><circle cx="519" cy="533" r="4.5" fill="#e8e8d8" opacity=".5"/><circle cx="666" cy="506" r="4.0" fill="#e0a8c0" opacity=".5"/><circle cx="553" cy="524" r="4.0" fill="#486830" opacity=".5"/><circle cx="443" cy="526" r="2.7" fill="#b8b040" opacity=".5"/><circle cx="568" cy="581" r="4.1" fill="#c8c8e8" opacity=".5"/><circle cx="449" cy="539" r="3.4" fill="#9a68a8" opacity=".5"/><circle cx="453" cy="512" r="3.2" fill="#b8b040" opacity=".5"/><circle cx="603" cy="482" r="4.9" fill="#e8e8d8" opacity=".5"/><circle cx="570" cy="485" r="3.1" fill="#f0f0f0" opacity=".5"/><circle cx="608" cy="497" r="4.2" fill="#9a68a8" opacity=".5"/><circle cx="560" cy="481" r="3.3" fill="#b8b040" opacity=".5"/><circle cx="460" cy="566" r="4.5" fill="#88b050" opacity=".5"/><circle cx="658" cy="479" r="4.7" fill="#70a040" opacity=".5"/><circle cx="497" cy="496" r="2.6" fill="#d8d048" opacity=".5"/><circle cx="657" cy="506" r="3.0" fill="#b8b040" opacity=".5"/><circle cx="443" cy="563" r="4.5" fill="#d8d048" opacity=".5"/><circle cx="464" cy="485" r="3.8" fill="#c8c8e8" opacity=".5"/><circle cx="623" cy="523" r="3.2" fill="#e0a8c0" opacity=".5"/><circle cx="485" cy="493" r="4.9" fill="#88b050" opacity=".5"/><circle cx="492" cy="579" r="2.6" fill="#70a040" opacity=".5"/><circle cx="499" cy="557" r="4.9" fill="#f0f0f0" opacity=".5"/><circle cx="526" cy="572" r="4.6" fill="#d8d048" opacity=".5"/><circle cx="661" cy="484" r="2.6" fill="#70a040" opacity=".5"/><circle cx="640" cy="550" r="4.7" fill="#70a040" opacity=".5"/><circle cx="638" cy="536" r="3.7" fill="#e8e8d8" opacity=".5"/><circle cx="393" cy="528" r="4.2" fill="#70a040" opacity=".5"/><circle cx="520" cy="518" r="2.8" fill="#b8b040" opacity=".5"/><circle cx="525" cy="563" r="3.4" fill="#e8e8d8" opacity=".5"/><circle cx="417" cy="531" r="2.9" fill="#d8d048" opacity=".5"/><circle cx="604" cy="576" r="4.6" fill="#9a68a8" opacity=".5"/><circle cx="357" cy="542" r="2.6" fill="#e0a8c0" opacity=".5"/><circle cx="440" cy="501" r="3.8" fill="#f0f0f0" opacity=".5"/><circle cx="371" cy="507" r="4.6" fill="#e8e8d8" opacity=".5"/><circle cx="371" cy="526" r="4.6" fill="#e8e8d8" opacity=".5"/><circle cx="382" cy="528" r="2.9" fill="#486830" opacity=".5"/><circle cx="378" cy="514" r="4.0" fill="#e0a8c0" opacity=".5"/><circle cx="469" cy="492" r="3.6" fill="#486830" opacity=".5"/><circle cx="583" cy="561" r="2.9" fill="#b8b040" opacity=".5"/><circle cx="473" cy="540" r="3.5" fill="#f0f0f0" opacity=".5"/><circle cx="607" cy="542" r="2.6" fill="#e0a8c0" opacity=".5"/><circle cx="553" cy="557" r="3.6" fill="#486830" opacity=".5"/><circle cx="574" cy="523" r="3.0" fill="#70a040" opacity=".5"/><circle cx="440" cy="538" r="3.1" fill="#e0a8c0" opacity=".5"/><circle cx="458" cy="581" r="4.5" fill="#f0f0f0" opacity=".5"/><circle cx="438" cy="523" r="4.8" fill="#d8d048" opacity=".5"/><circle cx="585" cy="568" r="4.5" fill="#f0f0f0" opacity=".5"/><circle cx="565" cy="554" r="3.8" fill="#b8b040" opacity=".5"/><circle cx="611" cy="552" r="2.9" fill="#88b050" opacity=".5"/><circle cx="384" cy="481" r="2.9" fill="#e0a8c0" opacity=".5"/><circle cx="567" cy="566" r="3.9" fill="#c8c8e8" opacity=".5"/><circle cx="597" cy="529" r="2.8" fill="#70a040" opacity=".5"/><circle cx="591" cy="577" r="3.9" fill="#e8e8d8" opacity=".5"/><circle cx="629" cy="491" r="3.1" fill="#d8d048" opacity=".5"/><circle cx="412" cy="499" r="4.3" fill="#b8b040" opacity=".5"/><circle cx="652" cy="499" r="3.5" fill="#b8b040" opacity=".5"/><circle cx="465" cy="518" r="3.4" fill="#d8d048" opacity=".5"/><circle cx="429" cy="577" r="3.5" fill="#9a68a8" opacity=".5"/><circle cx="534" cy="537" r="4.2" fill="#f0f0f0" opacity=".5"/><circle cx="404" cy="516" r="2.9" fill="#9a68a8" opacity=".5"/><circle cx="512" cy="526" r="4.9" fill="#f0f0f0" opacity=".5"/><circle cx="540" cy="569" r="3.2" fill="#9a68a8" opacity=".5"/><circle cx="418" cy="537" r="4.8" fill="#486830" opacity=".5"/><circle cx="623" cy="532" r="4.2" fill="#c8c8e8" opacity=".5"/><circle cx="624" cy="538" r="4.0" fill="#b8b040" opacity=".5"/><circle cx="439" cy="495" r="3.2" fill="#e8e8d8" opacity=".5"/><circle cx="608" cy="493" r="3.4" fill="#b8b040" opacity=".5"/><circle cx="456" cy="559" r="3.5" fill="#9a68a8" opacity=".5"/><circle cx="575" cy="551" r="3.7" fill="#70a040" opacity=".5"/><circle cx="618" cy="564" r="2.6" fill="#f0f0f0" opacity=".5"/><circle cx="668" cy="478" r="4.5" fill="#e0a8c0" opacity=".5"/><circle cx="559" cy="559" r="4.9" fill="#d8d048" opacity=".5"/><circle cx="624" cy="498" r="4.4" fill="#70a040" opacity=".5"/><circle cx="398" cy="542" r="4.7" fill="#e8e8d8" opacity=".5"/><circle cx="435" cy="569" r="3.0" fill="#486830" opacity=".5"/><circle cx="392" cy="500" r="2.6" fill="#c8c8e8" opacity=".5"/><circle cx="497" cy="554" r="2.5" fill="#486830" opacity=".5"/><circle cx="460" cy="520" r="2.7" fill="#88b050" opacity=".5"/><circle cx="558" cy="555" r="3.5" fill="#88b050" opacity=".5"/><circle cx="526" cy="484" r="2.7" fill="#c8c8e8" opacity=".5"/><circle cx="491" cy="520" r="4.8" fill="#f0f0f0" opacity=".5"/><circle cx="473" cy="559" r="3.2" fill="#88b050" opacity=".5"/><circle cx="568" cy="545" r="2.8" fill="#c8c8e8" opacity=".5"/><circle cx="653" cy="509" r="3.8" fill="#b8b040" opacity=".5"/><circle cx="391" cy="527" r="2.6" fill="#486830" opacity=".5"/><circle cx="448" cy="554" r="4.1" fill="#9a68a8" opacity=".5"/><circle cx="585" cy="487" r="4.7" fill="#486830" opacity=".5"/><circle cx="561" cy="484" r="2.9" fill="#f0f0f0" opacity=".5"/><circle cx="459" cy="553" r="3.6" fill="#b8b040" opacity=".5"/><circle cx="450" cy="491" r="3.3" fill="#88b050" opacity=".5"/><circle cx="580" cy="557" r="3.9" fill="#f0f0f0" opacity=".5"/><circle cx="478" cy="481" r="3.5" fill="#c8c8e8" opacity=".5"/><circle cx="514" cy="498" r="3.4" fill="#f0f0f0" opacity=".5"/><circle cx="460" cy="516" r="4.5" fill="#f0f0f0" opacity=".5"/><circle cx="377" cy="527" r="2.9" fill="#d8d048" opacity=".5"/><circle cx="541" cy="548" r="4.4" fill="#b8b040" opacity=".5"/><circle cx="584" cy="491" r="3.9" fill="#70a040" opacity=".5"/><circle cx="566" cy="515" r="4.0" fill="#9a68a8" opacity=".5"/><circle cx="401" cy="516" r="3.9" fill="#70a040" opacity=".5"/><circle cx="409" cy="491" r="3.4" fill="#c8c8e8" opacity=".5"/><circle cx="447" cy="567" r="4.7" fill="#88b050" opacity=".5"/><circle cx="654" cy="514" r="4.8" fill="#f0f0f0" opacity=".5"/><circle cx="453" cy="527" r="4.2" fill="#f0f0f0" opacity=".5"/><circle cx="449" cy="569" r="2.6" fill="#88b050" opacity=".5"/><circle cx="415" cy="543" r="4.4" fill="#d8d048" opacity=".5"/><circle cx="564" cy="527" r="4.1" fill="#f0f0f0" opacity=".5"/><circle cx="422" cy="563" r="2.8" fill="#88b050" opacity=".5"/><circle cx="444" cy="546" r="2.8" fill="#9a68a8" opacity=".5"/><circle cx="605" cy="542" r="2.6" fill="#e8e8d8" opacity=".5"/><circle cx="550" cy="528" r="3.8" fill="#88b050" opacity=".5"/><circle cx="648" cy="507" r="4.2" fill="#486830" opacity=".5"/><circle cx="544" cy="577" r="4.3" fill="#d8d048" opacity=".5"/><circle cx="463" cy="563" r="4.7" fill="#d8d048" opacity=".5"/><circle cx="493" cy="557" r="3.3" fill="#88b050" opacity=".5"/><circle cx="603" cy="517" r="4.3" fill="#70a040" opacity=".5"/><circle cx="478" cy="524" r="3.8" fill="#d8d048" opacity=".5"/><circle cx="488" cy="545" r="2.6" fill="#c8c8e8" opacity=".5"/><circle cx="499" cy="549" r="3.0" fill="#88b050" opacity=".5"/><circle cx="638" cy="553" r="4.6" fill="#486830" opacity=".5"/><circle cx="496" cy="512" r="3.1" fill="#e0a8c0" opacity=".5"/><circle cx="356" cy="494" r="2.9" fill="#486830" opacity=".5"/><circle cx="500" cy="492" r="2.6" fill="#70a040" opacity=".5"/><circle cx="539" cy="528" r="2.8" fill="#e8e8d8" opacity=".5"/><circle cx="547" cy="521" r="2.6" fill="#9a68a8" opacity=".5"/><circle cx="362" cy="522" r="2.6" fill="#e0a8c0" opacity=".5"/><circle cx="580" cy="498" r="3.5" fill="#e8e8d8" opacity=".5"/><circle cx="424" cy="481" r="3.0" fill="#88b050" opacity=".5"/><circle cx="460" cy="483" r="4.0" fill="#d8d048" opacity=".5"/><circle cx="609" cy="503" r="4.5" fill="#88b050" opacity=".5"/><circle cx="658" cy="526" r="3.2" fill="#f0f0f0" opacity=".5"/><circle cx="612" cy="542" r="3.3" fill="#486830" opacity=".5"/><circle cx="373" cy="520" r="4.0" fill="#d8d048" opacity=".5"/><circle cx="384" cy="490" r="3.7" fill="#e8e8d8" opacity=".5"/><circle cx="415" cy="529" r="3.0" fill="#486830" opacity=".5"/><circle cx="662" cy="525" r="4.8" fill="#88b050" opacity=".5"/><circle cx="451" cy="540" r="2.7" fill="#e0a8c0" opacity=".5"/><circle cx="447" cy="568" r="3.8" fill="#d8d048" opacity=".5"/><circle cx="527" cy="532" r="2.9" fill="#e0a8c0" opacity=".5"/><circle cx="588" cy="554" r="3.4" fill="#f0f0f0" opacity=".5"/><circle cx="493" cy="521" r="3.4" fill="#88b050" opacity=".5"/><circle cx="614" cy="528" r="4.8" fill="#b8b040" opacity=".5"/><circle cx="575" cy="579" r="2.9" fill="#e8e8d8" opacity=".5"/><circle cx="502" cy="557" r="3.3" fill="#d8d048" opacity=".5"/><circle cx="544" cy="562" r="4.7" fill="#e8e8d8" opacity=".5"/><circle cx="630" cy="522" r="5.0" fill="#486830" opacity=".5"/><circle cx="356" cy="492" r="3.3" fill="#d8d048" opacity=".5"/><circle cx="453" cy="522" r="3.1" fill="#70a040" opacity=".5"/><circle cx="370" cy="488" r="4.0" fill="#9a68a8" opacity=".5"/><circle cx="359" cy="496" r="3.1" fill="#70a040" opacity=".5"/><circle cx="532" cy="518" r="3.3" fill="#b8b040" opacity=".5"/><circle cx="633" cy="560" r="2.9" fill="#88b050" opacity=".5"/><circle cx="659" cy="493" r="2.7" fill="#c8c8e8" opacity=".5"/><circle cx="502" cy="496" r="2.8" fill="#b8b040" opacity=".5"/><circle cx="508" cy="547" r="3.5" fill="#486830" opacity=".5"/><circle cx="563" cy="559" r="4.6" fill="#c8c8e8" opacity=".5"/><circle cx="542" cy="564" r="2.8" fill="#70a040" opacity=".5"/><circle cx="357" cy="504" r="3.4" fill="#d8d048" opacity=".5"/><circle cx="646" cy="549" r="3.6" fill="#486830" opacity=".5"/><circle cx="559" cy="540" r="3.1" fill="#70a040" opacity=".5"/><circle cx="429" cy="520" r="3.0" fill="#c8c8e8" opacity=".5"/><circle cx="584" cy="571" r="3.7" fill="#b8b040" opacity=".5"/><circle cx="579" cy="568" r="4.9" fill="#486830" opacity=".5"/><circle cx="508" cy="559" r="3.7" fill="#e0a8c0" opacity=".5"/><circle cx="402" cy="528" r="4.1" fill="#e8e8d8" opacity=".5"/><circle cx="442" cy="520" r="3.7" fill="#486830" opacity=".5"/><circle cx="400" cy="521" r="3.6" fill="#e0a8c0" opacity=".5"/><circle cx="420" cy="526" r="4.9" fill="#c8c8e8" opacity=".5"/><circle cx="472" cy="489" r="4.9" fill="#c8c8e8" opacity=".5"/><circle cx="504" cy="585" r="3.4" fill="#70a040" opacity=".5"/><circle cx="624" cy="503" r="3.4" fill="#88b050" opacity=".5"/><circle cx="468" cy="566" r="4.8" fill="#70a040" opacity=".5"/><circle cx="553" cy="487" r="2.9" fill="#e8e8d8" opacity=".5"/><circle cx="371" cy="493" r="3.4" fill="#88b050" opacity=".5"/><circle cx="659" cy="512" r="2.6" fill="#f0f0f0" opacity=".5"/><circle cx="491" cy="509" r="4.0" fill="#e8e8d8" opacity=".5"/><circle cx="611" cy="522" r="3.1" fill="#c8c8e8" opacity=".5"/><circle cx="608" cy="518" r="3.3" fill="#c8c8e8" opacity=".5"/><circle cx="669" cy="489" r="3.1" fill="#b8b040" opacity=".5"/><circle cx="604" cy="529" r="3.9" fill="#486830" opacity=".5"/><circle cx="443" cy="489" r="3.7" fill="#e8e8d8" opacity=".5"/><circle cx="500" cy="530" r="3.8" fill="#b8b040" opacity=".5"/><circle cx="472" cy="543" r="3.0" fill="#c8c8e8" opacity=".5"/><circle cx="527" cy="517" r="3.6" fill="#486830" opacity=".5"/><circle cx="443" cy="499" r="4.9" fill="#c8c8e8" opacity=".5"/><circle cx="404" cy="506" r="2.6" fill="#f0f0f0" opacity=".5"/><circle cx="508" cy="497" r="4.8" fill="#88b050" opacity=".5"/><circle cx="536" cy="533" r="2.8" fill="#88b050" opacity=".5"/><circle cx="602" cy="557" r="2.8" fill="#c8c8e8" opacity=".5"/><circle cx="1209" cy="498" r="3.7" fill="#f0f0f0" opacity=".5"/><circle cx="1231" cy="534" r="3.0" fill="#88b050" opacity=".5"/><circle cx="1135" cy="534" r="2.6" fill="#486830" opacity=".5"/><circle cx="1091" cy="471" r="3.3" fill="#486830" opacity=".5"/><circle cx="1137" cy="491" r="3.5" fill="#9a68a8" opacity=".5"/><circle cx="1142" cy="540" r="3.1" fill="#88b050" opacity=".5"/><circle cx="1087" cy="474" r="2.8" fill="#f0f0f0" opacity=".5"/><circle cx="1215" cy="503" r="3.7" fill="#88b050" opacity=".5"/><circle cx="1110" cy="513" r="3.1" fill="#9a68a8" opacity=".5"/><circle cx="1293" cy="522" r="2.9" fill="#e8e8d8" opacity=".5"/><circle cx="1049" cy="529" r="3.3" fill="#9a68a8" opacity=".5"/><circle cx="1073" cy="510" r="3.8" fill="#9a68a8" opacity=".5"/><circle cx="1134" cy="477" r="3.0" fill="#e0a8c0" opacity=".5"/><circle cx="1042" cy="476" r="2.9" fill="#d8d048" opacity=".5"/><circle cx="1068" cy="496" r="2.7" fill="#b8b040" opacity=".5"/><circle cx="1085" cy="543" r="4.9" fill="#9a68a8" opacity=".5"/><circle cx="1099" cy="496" r="2.8" fill="#88b050" opacity=".5"/><circle cx="1255" cy="506" r="3.8" fill="#486830" opacity=".5"/><circle cx="1257" cy="503" r="3.7" fill="#e0a8c0" opacity=".5"/><circle cx="1175" cy="503" r="3.6" fill="#f0f0f0" opacity=".5"/><circle cx="1135" cy="529" r="4.8" fill="#c8c8e8" opacity=".5"/><circle cx="1079" cy="489" r="2.8" fill="#70a040" opacity=".5"/><circle cx="1195" cy="482" r="2.5" fill="#b8b040" opacity=".5"/><circle cx="1261" cy="532" r="4.2" fill="#b8b040" opacity=".5"/><circle cx="1172" cy="529" r="3.7" fill="#d8d048" opacity=".5"/><circle cx="1186" cy="494" r="4.0" fill="#b8b040" opacity=".5"/><circle cx="1119" cy="509" r="4.1" fill="#486830" opacity=".5"/><circle cx="1189" cy="524" r="4.7" fill="#486830" opacity=".5"/><circle cx="1252" cy="491" r="3.2" fill="#c8c8e8" opacity=".5"/><circle cx="1067" cy="508" r="4.3" fill="#486830" opacity=".5"/><circle cx="1100" cy="503" r="3.6" fill="#c8c8e8" opacity=".5"/><circle cx="1159" cy="511" r="5.0" fill="#9a68a8" opacity=".5"/><circle cx="1172" cy="503" r="2.6" fill="#b8b040" opacity=".5"/><circle cx="1144" cy="512" r="4.4" fill="#b8b040" opacity=".5"/><circle cx="1050" cy="536" r="3.0" fill="#e0a8c0" opacity=".5"/><circle cx="1054" cy="509" r="3.9" fill="#e8e8d8" opacity=".5"/><circle cx="1265" cy="502" r="4.3" fill="#e0a8c0" opacity=".5"/><circle cx="1129" cy="492" r="3.4" fill="#f0f0f0" opacity=".5"/><circle cx="1149" cy="541" r="4.0" fill="#d8d048" opacity=".5"/><circle cx="1073" cy="486" r="2.7" fill="#486830" opacity=".5"/><circle cx="1035" cy="539" r="3.3" fill="#70a040" opacity=".5"/><circle cx="1174" cy="527" r="3.6" fill="#70a040" opacity=".5"/><circle cx="1264" cy="498" r="2.8" fill="#88b050" opacity=".5"/><circle cx="1115" cy="512" r="4.6" fill="#d8d048" opacity=".5"/><circle cx="1042" cy="496" r="3.7" fill="#e8e8d8" opacity=".5"/><circle cx="1291" cy="506" r="3.5" fill="#9a68a8" opacity=".5"/><circle cx="1168" cy="503" r="3.6" fill="#c8c8e8" opacity=".5"/><circle cx="1060" cy="546" r="2.7" fill="#d8d048" opacity=".5"/><circle cx="1263" cy="528" r="2.7" fill="#486830" opacity=".5"/><circle cx="1037" cy="506" r="4.1" fill="#e0a8c0" opacity=".5"/><circle cx="1059" cy="521" r="4.7" fill="#e0a8c0" opacity=".5"/><circle cx="1094" cy="494" r="4.9" fill="#e0a8c0" opacity=".5"/><circle cx="1048" cy="509" r="3.8" fill="#f0f0f0" opacity=".5"/><circle cx="1095" cy="506" r="3.5" fill="#f0f0f0" opacity=".5"/><circle cx="1124" cy="504" r="3.1" fill="#f0f0f0" opacity=".5"/><circle cx="1184" cy="495" r="2.8" fill="#b8b040" opacity=".5"/><circle cx="1173" cy="518" r="3.3" fill="#486830" opacity=".5"/><circle cx="1259" cy="515" r="3.0" fill="#f0f0f0" opacity=".5"/><circle cx="1051" cy="503" r="4.1" fill="#c8c8e8" opacity=".5"/><circle cx="1163" cy="536" r="4.6" fill="#9a68a8" opacity=".5"/><circle cx="1273" cy="500" r="3.3" fill="#70a040" opacity=".5"/><circle cx="1231" cy="494" r="3.5" fill="#70a040" opacity=".5"/><circle cx="1256" cy="535" r="3.1" fill="#e8e8d8" opacity=".5"/><circle cx="1130" cy="486" r="3.1" fill="#c8c8e8" opacity=".5"/><circle cx="1103" cy="524" r="4.3" fill="#486830" opacity=".5"/><circle cx="1089" cy="492" r="3.9" fill="#9a68a8" opacity=".5"/><circle cx="1099" cy="524" r="4.5" fill="#70a040" opacity=".5"/><circle cx="1130" cy="487" r="3.5" fill="#f0f0f0" opacity=".5"/><circle cx="1175" cy="516" r="3.6" fill="#c8c8e8" opacity=".5"/><circle cx="1050" cy="531" r="3.7" fill="#88b050" opacity=".5"/><circle cx="1186" cy="489" r="4.2" fill="#e0a8c0" opacity=".5"/><circle cx="1093" cy="533" r="3.4" fill="#88b050" opacity=".5"/><circle cx="1294" cy="507" r="2.8" fill="#9a68a8" opacity=".5"/><circle cx="1144" cy="537" r="4.0" fill="#9a68a8" opacity=".5"/><circle cx="1063" cy="510" r="3.7" fill="#c8c8e8" opacity=".5"/><circle cx="1175" cy="537" r="3.4" fill="#88b050" opacity=".5"/><circle cx="1046" cy="496" r="4.1" fill="#70a040" opacity=".5"/><circle cx="1189" cy="515" r="3.9" fill="#c8c8e8" opacity=".5"/><circle cx="1229" cy="491" r="3.6" fill="#e8e8d8" opacity=".5"/><circle cx="1180" cy="529" r="3.7" fill="#e0a8c0" opacity=".5"/><circle cx="1182" cy="488" r="3.9" fill="#70a040" opacity=".5"/><circle cx="1135" cy="477" r="2.9" fill="#f0f0f0" opacity=".5"/><circle cx="1273" cy="507" r="3.5" fill="#f0f0f0" opacity=".5"/><circle cx="1086" cy="501" r="3.4" fill="#b8b040" opacity=".5"/><circle cx="1223" cy="517" r="2.9" fill="#70a040" opacity=".5"/><circle cx="1136" cy="513" r="3.5" fill="#486830" opacity=".5"/><circle cx="1052" cy="490" r="3.1" fill="#486830" opacity=".5"/><circle cx="1103" cy="485" r="3.7" fill="#d8d048" opacity=".5"/><circle cx="1148" cy="489" r="3.2" fill="#9a68a8" opacity=".5"/><circle cx="1208" cy="488" r="4.5" fill="#c8c8e8" opacity=".5"/><circle cx="1061" cy="524" r="3.1" fill="#d8d048" opacity=".5"/><circle cx="1120" cy="529" r="2.6" fill="#9a68a8" opacity=".5"/><circle cx="1070" cy="540" r="4.4" fill="#88b050" opacity=".5"/><circle cx="1166" cy="523" r="4.9" fill="#e0a8c0" opacity=".5"/><circle cx="1147" cy="492" r="4.0" fill="#c8c8e8" opacity=".5"/><circle cx="1079" cy="519" r="4.5" fill="#70a040" opacity=".5"/><circle cx="1069" cy="526" r="4.6" fill="#70a040" opacity=".5"/><circle cx="1224" cy="498" r="4.1" fill="#e8e8d8" opacity=".5"/><circle cx="1128" cy="477" r="5.0" fill="#70a040" opacity=".5"/><circle cx="1227" cy="507" r="2.9" fill="#c8c8e8" opacity=".5"/><circle cx="1176" cy="521" r="4.3" fill="#b8b040" opacity=".5"/><circle cx="1102" cy="475" r="4.7" fill="#d8d048" opacity=".5"/><circle cx="1071" cy="469" r="4.1" fill="#d8d048" opacity=".5"/><circle cx="1170" cy="525" r="5.0" fill="#f0f0f0" opacity=".5"/><circle cx="1194" cy="489" r="2.7" fill="#e8e8d8" opacity=".5"/><circle cx="1212" cy="501" r="2.6" fill="#e8e8d8" opacity=".5"/><circle cx="1170" cy="494" r="2.8" fill="#486830" opacity=".5"/><circle cx="1244" cy="499" r="3.6" fill="#f0f0f0" opacity=".5"/><circle cx="1209" cy="494" r="3.6" fill="#70a040" opacity=".5"/><circle cx="1091" cy="481" r="2.7" fill="#e0a8c0" opacity=".5"/><circle cx="1117" cy="514" r="4.2" fill="#f0f0f0" opacity=".5"/><circle cx="1098" cy="476" r="2.6" fill="#e0a8c0" opacity=".5"/><circle cx="1123" cy="484" r="3.8" fill="#b8b040" opacity=".5"/><circle cx="1134" cy="540" r="3.8" fill="#70a040" opacity=".5"/><circle cx="1146" cy="493" r="2.9" fill="#d8d048" opacity=".5"/><circle cx="1153" cy="510" r="4.8" fill="#c8c8e8" opacity=".5"/><circle cx="1186" cy="518" r="3.8" fill="#88b050" opacity=".5"/><circle cx="1115" cy="510" r="3.4" fill="#70a040" opacity=".5"/><circle cx="1165" cy="506" r="4.4" fill="#70a040" opacity=".5"/><circle cx="1041" cy="518" r="4.3" fill="#e8e8d8" opacity=".5"/><circle cx="1047" cy="522" r="4.5" fill="#c8c8e8" opacity=".5"/><circle cx="1163" cy="530" r="3.3" fill="#9a68a8" opacity=".5"/><circle cx="1181" cy="500" r="2.8" fill="#e8e8d8" opacity=".5"/><circle cx="1212" cy="487" r="4.4" fill="#9a68a8" opacity=".5"/><circle cx="1173" cy="530" r="2.8" fill="#f0f0f0" opacity=".5"/><circle cx="1078" cy="545" r="3.8" fill="#c8c8e8" opacity=".5"/><circle cx="1053" cy="522" r="3.6" fill="#d8d048" opacity=".5"/><circle cx="1220" cy="513" r="3.6" fill="#e0a8c0" opacity=".5"/><circle cx="1124" cy="543" r="3.3" fill="#486830" opacity=".5"/><circle cx="1227" cy="489" r="4.4" fill="#88b050" opacity=".5"/><circle cx="1088" cy="476" r="4.4" fill="#c8c8e8" opacity=".5"/><circle cx="1284" cy="506" r="4.3" fill="#70a040" opacity=".5"/><circle cx="1191" cy="521" r="2.6" fill="#b8b040" opacity=".5"/><circle cx="1140" cy="499" r="2.7" fill="#486830" opacity=".5"/><circle cx="1081" cy="508" r="3.6" fill="#c8c8e8" opacity=".5"/><circle cx="1145" cy="514" r="3.6" fill="#e0a8c0" opacity=".5"/><circle cx="1045" cy="527" r="3.4" fill="#e0a8c0" opacity=".5"/><circle cx="1224" cy="490" r="2.8" fill="#70a040" opacity=".5"/><circle cx="1264" cy="529" r="4.1" fill="#e8e8d8" opacity=".5"/><circle cx="1234" cy="506" r="3.8" fill="#e0a8c0" opacity=".5"/><circle cx="1180" cy="517" r="3.5" fill="#88b050" opacity=".5"/><circle cx="1203" cy="525" r="3.0" fill="#e8e8d8" opacity=".5"/><circle cx="1267" cy="532" r="4.9" fill="#d8d048" opacity=".5"/><circle cx="1071" cy="530" r="2.8" fill="#d8d048" opacity=".5"/><circle cx="1111" cy="536" r="3.6" fill="#e0a8c0" opacity=".5"/><circle cx="1073" cy="485" r="3.7" fill="#e0a8c0" opacity=".5"/><circle cx="1198" cy="509" r="3.1" fill="#e8e8d8" opacity=".5"/><circle cx="1040" cy="544" r="3.9" fill="#486830" opacity=".5"/><circle cx="1091" cy="478" r="2.7" fill="#70a040" opacity=".5"/><circle cx="1093" cy="543" r="4.3" fill="#70a040" opacity=".5"/><circle cx="1059" cy="513" r="4.6" fill="#70a040" opacity=".5"/><circle cx="1089" cy="526" r="3.8" fill="#e8e8d8" opacity=".5"/><circle cx="1113" cy="535" r="4.4" fill="#9a68a8" opacity=".5"/><circle cx="1100" cy="484" r="3.4" fill="#9a68a8" opacity=".5"/><circle cx="1091" cy="484" r="4.5" fill="#f0f0f0" opacity=".5"/><circle cx="1153" cy="488" r="4.8" fill="#f0f0f0" opacity=".5"/><circle cx="1104" cy="491" r="3.0" fill="#f0f0f0" opacity=".5"/><circle cx="1275" cy="493" r="2.8" fill="#d8d048" opacity=".5"/><circle cx="1269" cy="500" r="4.5" fill="#486830" opacity=".5"/><circle cx="1237" cy="487" r="4.0" fill="#d8d048" opacity=".5"/><circle cx="1067" cy="482" r="3.4" fill="#486830" opacity=".5"/><circle cx="1079" cy="494" r="4.4" fill="#d8d048" opacity=".5"/><circle cx="1267" cy="512" r="3.7" fill="#e8e8d8" opacity=".5"/><circle cx="1237" cy="503" r="3.7" fill="#9a68a8" opacity=".5"/><circle cx="1066" cy="482" r="3.2" fill="#88b050" opacity=".5"/><circle cx="1155" cy="506" r="4.3" fill="#486830" opacity=".5"/><circle cx="1278" cy="494" r="3.7" fill="#b8b040" opacity=".5"/><circle cx="1152" cy="506" r="3.0" fill="#c8c8e8" opacity=".5"/><circle cx="1242" cy="489" r="3.4" fill="#d8d048" opacity=".5"/><circle cx="1036" cy="486" r="4.7" fill="#486830" opacity=".5"/><circle cx="1134" cy="477" r="3.6" fill="#f0f0f0" opacity=".5"/><circle cx="1228" cy="532" r="4.2" fill="#88b050" opacity=".5"/><circle cx="1263" cy="512" r="2.8" fill="#d8d048" opacity=".5"/><circle cx="1233" cy="521" r="4.6" fill="#70a040" opacity=".5"/><circle cx="1108" cy="521" r="4.5" fill="#e8e8d8" opacity=".5"/><circle cx="1048" cy="503" r="3.8" fill="#d8d048" opacity=".5"/><circle cx="1218" cy="528" r="3.3" fill="#b8b040" opacity=".5"/><circle cx="1119" cy="544" r="4.3" fill="#70a040" opacity=".5"/><polygon points="430,595 672,562 672,704 395,720" fill="url(#plat)" /><polygon points="1040,552 1300,532 1560,602 1590,622 1040,690" fill="url(#plat)" /><path d="M1355 478L1420 492L1420 545L1355 528ZM1420 492L1500 512L1500 572L1420 545M1500 512L1570 528L1660 548M1500 572L1570 592L1660 600M1570 528V592M1380 484V534M1400 488V540M1440 497V552M1460 502V558M1480 507V565M1520 517V578M1545 522V585M1600 535V595M1625 540V598" stroke="#8e9c98" stroke-width="2.5" fill="none"/><polygon points="395,749 700,726 700,968 370,968" fill="#0b0b0a" /><polygon points="1000,700 1588,638 1565,835 1000,935" fill="url(#mesh)" /><polygon points="1588,640 1660,625 1660,910 1560,930" fill="#070707" /><polygon points="395,718 673,702 673,730 395,751" fill="#6e6c66" /><polygon points="395,718 673,702 673,711 395,729" fill="#98968e" /><polygon points="1040,668 1588,616 1588,640 1040,702" fill="#6c6658" /><polygon points="1040,668 1588,616 1588,623 1040,677" fill="#9c9484" /><polygon points="1000,915 1560,826 1560,848 1000,946" fill="#5c5548" /><polygon points="1000,915 1560,826 1560,832 1000,922" fill="#7c7464" /><polygon points="1600,822 1660,806 1660,828 1600,842" fill="#7c5c28" /><polygon points="1385,968 1660,903 1660,968" fill="url(#wood)" /><polygon points="1578,620 1606,620 1585,940 1548,940" fill="#4c463a" /><polygon points="1540,925 1590,915 1600,940 1550,950" fill="#3a342c" /><polygon points="1630,40 1660,40 1646,234 1612,630 1576,630 1614,234" fill="#30363a" /><polygon points="1640,40 1649,40 1622,420 1612,420" fill="#50585c" /><polygon points="1655,40 1660,40 1660,300 1640,300" fill="#141414" /><polygon points="1150,40 1640,40 1622,135 1585,150 1200,96" fill="url(#tarp)" /><polygon points="940,84 1615,150 1615,176 940,112" fill="url(#pipe2)" /><polygon points="900,72 1150,40 1235,40 912,100" fill="#bcbcac" /><polygon points="900,72 1150,40 1180,40 905,82" fill="#dcdccc" /><polygon points="500,40 848,40 848,75" fill="#20222e" /><polygon points="0,40 503,40 848,72 848,108 60,58 0,56" fill="#74746a" /><polygon points="225,41 503,41 848,73 848,86 225,47" fill="#e6e6c4" /><polygon points="60,41 225,41 225,47 60,46" fill="#8c8c82" /><polygon points="60,54 848,99 848,108 60,59" fill="#45453e" /><polygon points="848,100 885,100 880,200 850,200" fill="#686e74" /><polygon points="843,42 905,42 925,95 880,115 845,105" fill="#c8c8c0" /><polygon points="855,50 880,48 885,100 858,100" fill="#e8e8e0" /><polygon points="905,95 945,105 940,130 912,120" fill="#9a9a92" /><polygon points="700,440 812,398 862,452 915,452 962,408 1022,472 1052,560 1062,650 1040,722 992,762 986,900 1000,968 690,968 702,800 680,722 665,560 672,480" fill="#131315" /><polygon points="690,930 1000,930 1000,968 690,968" fill="#16223e" /><polygon points="700,900 990,880 990,935 700,935" fill="#101012" /><polygon points="668,490 720,450 790,440 800,600 720,690 672,640" fill="#222226" /><polygon points="700,470 800,430 820,470 720,520" fill="#1f1f23" /><polygon points="930,470 1010,480 1040,580 960,560" fill="#1d1d21" /><polygon points="700,640 900,700 1040,660 1040,700 900,740 700,690" fill="#1c1c20" /><polygon points="850,395 925,415 915,452 862,462" fill="#8a5e4c" /><polygon points="822,282 850,266 902,256 954,276 952,342 932,402 902,428 862,412 830,362" fill="url(#face)" /><polygon points="806,290 826,286 828,335 812,330" fill="#b88870" /><polygon points="925,285 954,278 952,342 932,402 905,426 915,380 930,330" fill="#7c5242" opacity=".75"/><polygon points="835,305 945,305 945,332 835,330" fill="#6e4a3c" opacity=".6"/><path d="M845 318L885 322M905 326L940 322" stroke="#3a2820" stroke-width="6"/><path d="M868 385L912 390" stroke="#6a4034" stroke-width="4"/><path d="M892 330L886 368L902 372" stroke="#8a5c48" stroke-width="4" fill="none"/><polygon points="820,285 828,214 880,184 942,194 967,230 957,280 902,258 850,268" fill="#5c4a32" /><polygon points="850,215 905,195 945,215 930,240 870,240" fill="#7c6a4c" /><polygon points="905,440 924,456 782,602 762,586" fill="#6e6e56" /><polygon points="810,432 829,432 882,620 863,620" fill="#8cd41c" /><polygon points="906,446 924,452 886,620 868,620" fill="#7cc418" /><polygon points="978,588 1016,574 1012,606 976,612" fill="#c09078" /><polygon points="928,704 976,714 962,736 930,730" fill="#b08068" /><polygon points="770,628 815,621 823,655 790,663 772,648" fill="#c09078" /><polygon points="680,690 712,690 716,800 686,800" fill="#343a2c" /><polygon points="790,738 882,774 856,838 760,800" fill="#6aa82c" /><polygon points="795,748 872,778 852,826 772,796" fill="#ececec" /><path d="M800 765L845 783M795 778L840 796M790 790L835 808" stroke="#1c1c1c" stroke-width="8" stroke-dasharray="9 5"/><polygon points="96,319 178,326 196,367 215,426 325,471 407,537 429,604 422,648 403,715 385,826 370,970 0,970 0,611 41,578 37,545 74,478 148,382 129,345" fill="url(#jacketb)" /><polygon points="215,440 320,480 400,545 420,610 300,600 230,520" fill="#2278ea" opacity=".7"/><polygon points="120,620 250,600 390,660 380,740 200,720 100,760" fill="#1e72e4" opacity=".6"/><path d="M215 493C190 530 165 580 141 648M325 530C280 550 230 600 200 648M399 619C340 630 270 670 222 715M385 737C320 745 230 765 170 803M325 840C260 842 160 860 96 900M281 929L163 937M196 367C205 400 215 420 235 440" stroke="#0a3c9c" stroke-width="10" fill="none" opacity=".85" stroke-linecap="round"/><path d="M81 485C78 540 60 680 22 885" stroke="#08245c" stroke-width="11" fill="none"/><path d="M100 500C96 560 80 700 44 900" stroke="#0c48ac" stroke-width="12" fill="none" opacity=".8"/><polygon points="96,330 129,345 148,382 74,478 37,545 0,567 0,493 74,426 118,367" fill="#e2e2ec" /><polygon points="0,567 37,545 41,578 0,611" fill="#86d81c" /><polygon points="0,255 44,290 89,306 111,337 118,367 74,426 0,493" fill="#d2a896" /><polygon points="60,300 111,337 118,367 74,426 80,360" fill="#b88c7a" opacity=".7"/><polygon points="0,58 22,72 48,110 68,160 80,215 88,300 62,306 30,290 0,262" fill="#c0c0c0" /><polygon points="0,58 22,72 48,110 68,160 80,215 86,280 70,215 56,160 38,115 14,80 0,72" fill="#e6e6e6" /><polygon points="0,195 36,225 52,285 28,292 0,258" fill="#8e8e8e" /><text x="10" y="790" font-size="27" fill="#a8c8f0" font-family="Liberation Sans, sans-serif">Co</text></g></g></svg>
<div style="position:absolute;left:617.5px;top:943px;width:814.5px;height:52px;background:#f0f0f0;"></div>
<div class="t" style="left:624.7px;top:945.5px;font-size:11.3px;line-height:15px;transform:scaleX(1.008);transform-origin:0 50%;">00:07</div>
<div class="t" style="left:1393.5px;top:945.5px;font-size:11.3px;line-height:15px;transform:scaleX(1.014);transform-origin:0 50%;">-00:07</div>
<div style="position:absolute;left:668.5px;top:947px;width:708px;height:9.5px;background:linear-gradient(#c4c4c4,#dedede 60%,#e6e6e6);border-radius:5px;"></div>
<div style="position:absolute;left:622.3px;top:963.5px;width:27.5px;height:27px;background:#e1e1e1;border:1px solid #adadad;"></div><svg style="position:absolute;left:622.3px;top:963.5px" width="29.5" height="29" viewBox="0 0 29.5 29"><rect x="7.7" y="6" width="4.5" height="17.2" fill="#6e6e6e"/><rect x="16.7" y="6" width="5.2" height="17.2" fill="#6e6e6e"/></svg>
<div style="position:absolute;left:666.3px;top:966px;width:21.5px;height:21.5px;background:#e1e1e1;border:1px solid #adadad;"></div><svg style="position:absolute;left:666.3px;top:966px" width="23.5" height="23.5" viewBox="0 0 23.5 23.5"><rect x="4.5" y="7.5" width="2" height="8.5" fill="#6e6e6e"/><path d="M12.5 7.5V16L6.5 11.75ZM19 7.5V16L12.5 11.75Z" fill="#6e6e6e"/></svg>
<div style="position:absolute;left:692.3px;top:966px;width:21.5px;height:21.5px;background:#e1e1e1;border:1px solid #adadad;"></div><svg style="position:absolute;left:692.3px;top:966px" width="23.5" height="23.5" viewBox="0 0 23.5 23.5"><rect x="7" y="7.2" width="9.5" height="9.5" fill="#6e6e6e"/></svg>
<div style="position:absolute;left:718.3px;top:966px;width:21.5px;height:21.5px;background:#e1e1e1;border:1px solid #adadad;"></div><svg style="position:absolute;left:718.3px;top:966px" width="23.5" height="23.5" viewBox="0 0 23.5 23.5"><rect x="17" y="7.5" width="2" height="8.5" fill="#6e6e6e"/><path d="M4.5 7.5V16L11 11.75ZM11 7.5V16L17 11.75Z" fill="#6e6e6e"/></svg>
<div style="position:absolute;left:756.3px;top:966px;width:21.5px;height:21.5px;background:#e1e1e1;border:1px solid #adadad;"></div><svg style="position:absolute;left:756.3px;top:966px" width="23.5" height="23.5" viewBox="0 0 23.5 23.5"><path d="M4.5 9V5.5H9M14.5 5.5H19V9M19 14.5V18H14.5M9 18H4.5V14.5" stroke="#6e6e6e" stroke-width="2.5" fill="none"/></svg>
<div style="position:absolute;left:782px;top:966px;width:21.5px;height:21.5px;background:#e1e1e1;border:1px solid #adadad;"></div><svg style="position:absolute;left:782px;top:966px" width="23.5" height="23.5" viewBox="0 0 23.5 23.5"><path d="M6.5 5V18.5M11.75 5V18.5M17 5V18.5" stroke="#6e6e6e" stroke-width="2.5"/><path d="M4 9L6.5 5.5L9 9ZM9.25 15L11.75 18.5L14.25 15ZM14.5 11.5H19.5V13.5H14.5Z" fill="#6e6e6e"/></svg>
<div style="position:absolute;left:820.2px;top:966px;width:21.5px;height:21.5px;background:#e1e1e1;border:1px solid #adadad;"></div><svg style="position:absolute;left:820.2px;top:966px" width="23.5" height="23.5" viewBox="0 0 23.5 23.5"><path d="M5 7H18M5 11.5H18M5 16H13" stroke="#6e6e6e" stroke-width="2.5"/><path d="M14.5 13.5L19 16L14.5 18.5Z" fill="#6e6e6e"/></svg>
<div style="position:absolute;left:846.2px;top:966px;width:21.5px;height:21.5px;background:#e1e1e1;border:1px solid #adadad;"></div><svg style="position:absolute;left:846.2px;top:966px" width="23.5" height="23.5" viewBox="0 0 23.5 23.5"><path d="M5.5 11V8.5Q5.5 6.5 7.5 6.5H15M18 12.5V15Q18 17 16 17H8.5" stroke="#6e6e6e" stroke-width="2.5" fill="none"/><path d="M14.5 3.5L19 6.5L14.5 9.5ZM9 14L4.5 17L9 20Z" fill="#6e6e6e"/></svg>
<div style="position:absolute;left:872.2px;top:966px;width:21.5px;height:21.5px;background:#e1e1e1;border:1px solid #adadad;"></div><svg style="position:absolute;left:872.2px;top:966px" width="23.5" height="23.5" viewBox="0 0 23.5 23.5"><path d="M5 6.5L17 17.5M5 17.5L9.5 13.4M13 10.2L17 6.5" stroke="#6e6e6e" stroke-width="2.5" fill="none"/><path d="M14 5H19V10ZM14 19H19V14Z" fill="#6e6e6e"/></svg>
<svg style="position:absolute;left:1318px;top:978px" width="17" height="15" viewBox="0 0 17 15"><path d="M1 5H4L8 1.5V13.5L4 10H1Z" fill="#7a7a7a"/><path d="M9.8 4.5Q11.6 7.5 9.8 10.5M11.8 3Q14.6 7.5 11.8 12M13.8 1.5Q17.4 7.5 13.8 13.5" stroke="#e8a030" stroke-width="1.2" fill="none"/></svg>
<div class="t" style="left:1343.4px;top:969.5px;font-size:9.8px;line-height:13px;transform:scaleX(0.958);transform-origin:0 50%;color:#7a7a7a;">100%</div>
<svg style="position:absolute;left:1338px;top:968px" width="78" height="25" viewBox="1338 968 78 25"><defs><linearGradient id="vg" x1="0" y1="0" x2="0" y2="1"><stop offset="0" stop-color="#8ee07a"/><stop offset=".5" stop-color="#38b438"/><stop offset="1" stop-color="#2a982a"/></linearGradient><clipPath id="vc"><path d="M1340 990.5L1412.5 970.5V990.5Z"/></clipPath></defs><path d="M1340 990.5L1412.5 970.5V990.5Z" fill="#fff"/><rect x="1338" y="968" width="60.5" height="25" fill="url(#vg)" clip-path="url(#vc)"/><rect x="1396" y="968" width="2.5" height="25" fill="#b8e070" clip-path="url(#vc)"/><path d="M1340 990.5L1412.5 970.5V990.5Z" fill="none" stroke="#8c8c8c" stroke-width="1.6" stroke-linejoin="round"/></svg>
<svg style="position:absolute;left:1422px;top:984px" width="9" height="9"><path d="M7 1v2M7 4v2M4 4v2M7 7v2M4 7v2M1 7v2" stroke="#b4b4b4" stroke-width="2.5" fill="none"/></svg>
<div style="position:absolute;left:1715.5px;top:976px;width:85px;height:33px;background:rgba(255,255,255,.22);"></div>
<div class="t" style="left:1719.8px;top:980.0px;font-size:20px;line-height:26px;font-weight:bold;color:rgba(255,255,255,.85);">PRO</div>
<svg style="position:absolute;left:1762px;top:982px" width="28" height="22" viewBox="0 0 28 22"><defs><clipPath id="tvc"><path d="M1 1.2L27 0.3L26.6 19.6L0.4 20.6Z"/></clipPath></defs><g clip-path="url(#tvc)"><rect width="28" height="22" fill="#e8d018"/><path d="M0 0H13L9 9L0 12Z" fill="#2c70c0"/><path d="M0 12L9 9L13 0H16L8 22H0Z" fill="#48a838"/><path d="M20 0H28V22H16Z" fill="#d42020"/></g></svg>
<div class="t" style="left:1765.0px;top:981.7px;font-size:17px;line-height:22px;transform:scaleX(1.036);transform-origin:0 50%;font-weight:bold;color:#fff;text-shadow:0 0 2px rgba(0,0,0,.5);">TV</div>
<div style="position:absolute;left:1794px;top:984px;width:4px;height:20px;background:repeating-linear-gradient(rgba(255,255,255,.5) 0 2px,transparent 2px 4px);"></div>
</body></html>
